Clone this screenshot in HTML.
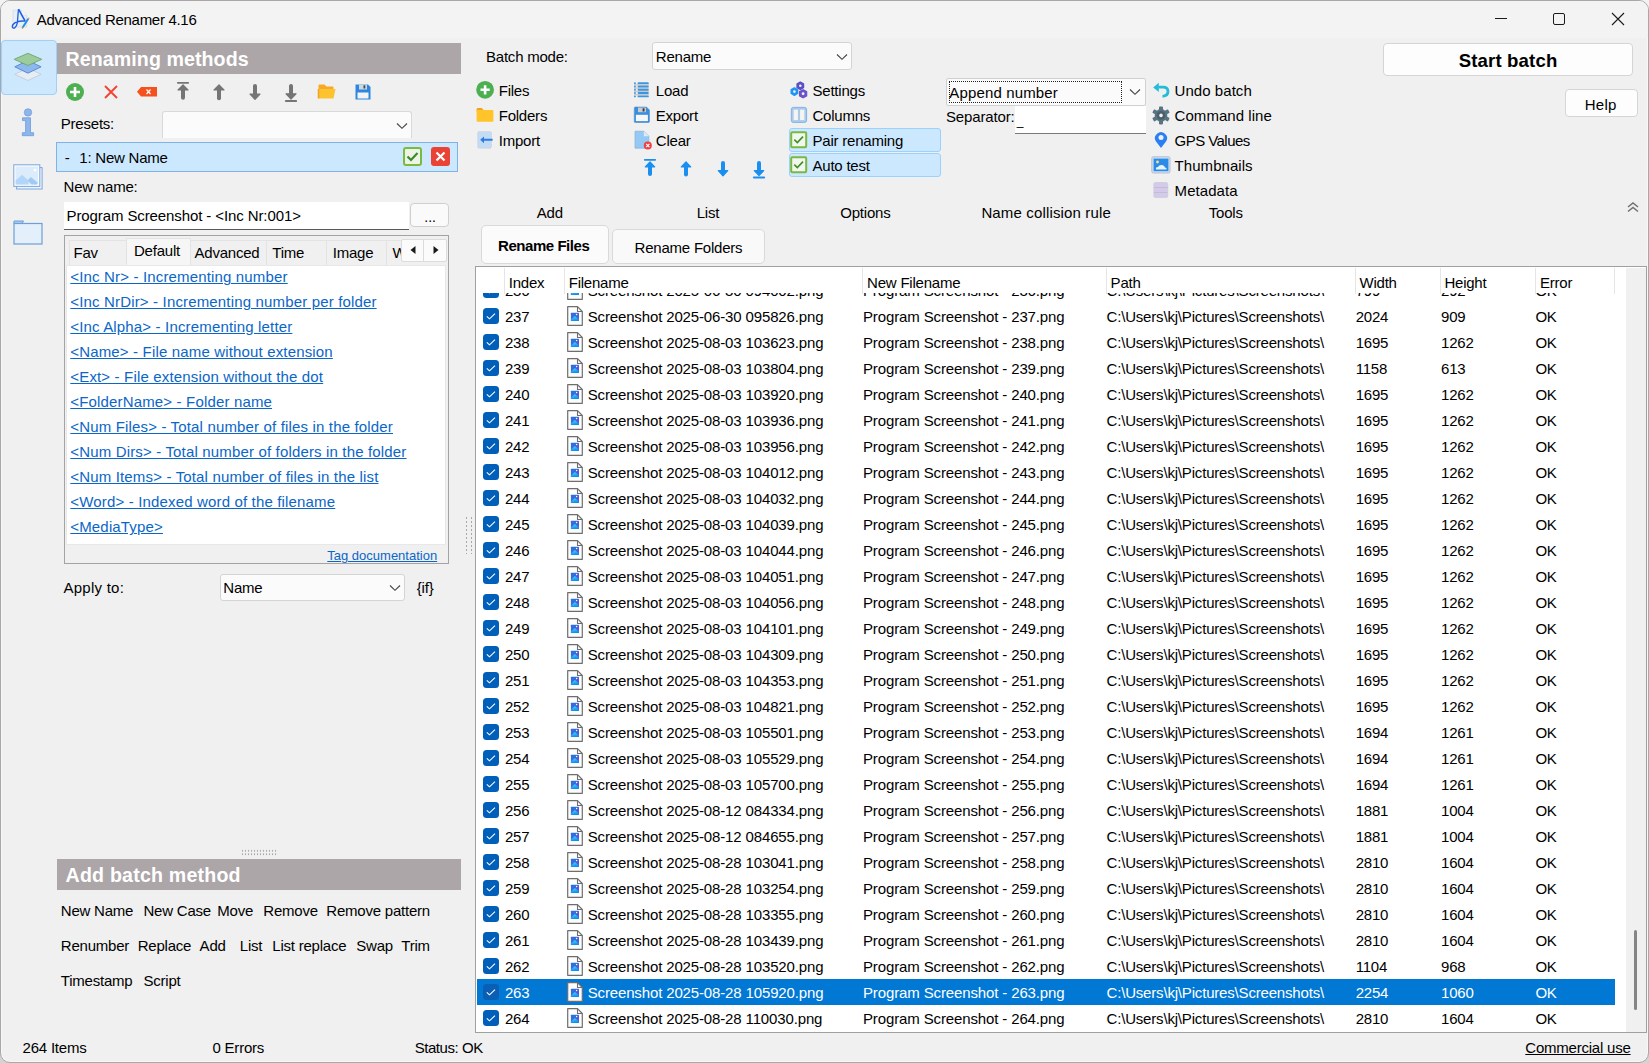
<!DOCTYPE html><html><head><meta charset="utf-8"><style>
html,body{margin:0;padding:0;width:1649px;height:1063px;overflow:hidden;background:linear-gradient(#f2f2f2 50%,#d3d3d3 50%)}
body{position:relative;font-family:"Liberation Sans",sans-serif;color:#000}
.t{position:absolute;white-space:nowrap}
.b{position:absolute;box-sizing:border-box}
a,.u{text-decoration:underline}
</style></head><body>
<svg width="0" height="0" style="position:absolute"><defs><linearGradient id="fg" x1="0" y1="0" x2="1" y2="1"><stop offset="0" stop-color="#1f78e0"/><stop offset="1" stop-color="#6a4fcf"/></linearGradient><linearGradient id="fm" x1="0" y1="0" x2="0.3" y2="1"><stop offset="0" stop-color="#48dcfb"/><stop offset="1" stop-color="#128ef0"/></linearGradient></defs></svg>
<div class="b" style="left:0px;top:0px;width:1649px;height:1063px;background:#f0f0f0;border:1px solid #a9a7a8;border-radius:10px;box-shadow:inset 0 0 0 1px #f7f7f7;"></div>
<div class="b" style="left:1px;top:1px;width:1647px;height:37px;background:#f3f3f3;border-radius:9px 9px 0 0;"></div>
<svg class="b" style="left:10px;top:7px" width="22" height="24" viewBox="0 0 22 24">
<path d="M3 3.2 H11.5 L16.6 8.2 V20 H3 Z" fill="#e6eef6" stroke="#d0d8e0" stroke-width="0.7"/>
<path d="M11.5 3.2 V8.2 H16.6" fill="#f4f8fb" stroke="#d0d8e0" stroke-width="0.5"/>
<path d="M8.5 2.2 Q7.8 9 7.6 13 Q7.3 18.5 5 20.6 Q3 22 2.3 20 Q2 17.6 5.2 15.6 Q8 14 12 14 L15.5 14.2" fill="none" stroke="#1d5fe0" stroke-width="1.3"/>
<path d="M8.5 2.2 L15 13.8" fill="none" stroke="#1d5fe0" stroke-width="1.6"/>
<path d="M12.8 20.3 L18.3 11.8" stroke="#1a8fe8" stroke-width="1.9"/>
<circle cx="18.6" cy="11.3" r="0.9" fill="#f0907e"/>
<circle cx="12.5" cy="20.8" r="0.9" fill="#c8901c"/>
</svg>
<div class="t" style="left:36.8px;top:10.1px;font-size:15px;line-height:20px;letter-spacing:-0.3px;">Advanced Renamer 4.16</div>
<div class="b" style="left:1495px;top:18px;width:12px;height:1px;background:#1a1a1a;"></div>
<div class="b" style="left:1553px;top:13px;width:12px;height:12px;border:1px solid #1a1a1a;border-radius:2px;"></div>
<svg class="b" style="left:1611px;top:12px" width="14" height="14" viewBox="0 0 14 14"><path d="M1 1 L13 13 M13 1 L1 13" stroke="#1a1a1a" stroke-width="1.1"/></svg>
<div class="b" style="left:1px;top:40px;width:56px;height:55px;background:#cde8fd;border:1px solid #9fd0f8;border-radius:4px;"></div>
<svg class="b" style="left:8px;top:45px" width="40" height="40" viewBox="0 0 40 40">
<path d="M6.8 29.3 L19.9 23 L33.1 29.3 L19.9 35.5 Z" fill="#e6edf5" stroke="#c3c6d6" stroke-width="0.8"/>
<path d="M6.8 21.8 L19.9 15.5 L33.1 21.8 L19.9 28.2 Z" fill="#8cb8ef" stroke="#4f86cf" stroke-width="0.9"/>
<path d="M6.2 14.3 L19.9 8.3 L33.8 14.3 L19.9 20.5 Z" fill="#9dcb9b" stroke="#69a86a" stroke-width="0.9"/>
</svg>
<svg class="b" style="left:18px;top:104px" width="20" height="34" viewBox="0 0 20 34">
<circle cx="10" cy="8.4" r="3.7" fill="#8db6ee" stroke="#6f9ad8" stroke-width="0.7"/>
<path d="M4.5 13.8 H12.5 V28.7 H15.6 V31.7 H4.3 V28.7 H7.6 V16.6 H4.5 Z" fill="#8db6ee" stroke="#6f9ad8" stroke-width="0.8"/>
</svg>
<svg class="b" style="left:13px;top:164px" width="30" height="26" viewBox="0 0 30 26">
<rect x="3.6" y="3.6" width="25.5" height="21.4" fill="#eef6fd" stroke="#7aa6dc" stroke-width="1"/>
<rect x="0.8" y="0.8" width="26" height="21.6" fill="#fafcff" stroke="#7aa6dc" stroke-width="1"/>
<rect x="2.6" y="2.6" width="22.4" height="18" fill="#dcecfb"/>
<path d="M2.6 20.6 V16.5 L9 10.7 L15.5 16.5 V20.6 Z" fill="#b3d6f8"/>
<path d="M14.5 16.4 L17.8 13 L25 19 L23.5 20.6 H18.5 Z" fill="#9fcaf4"/>
<rect x="20.8" y="4.8" width="2.6" height="2.6" fill="#fff"/>
</svg>
<svg class="b" style="left:13px;top:219px" width="30" height="26" viewBox="0 0 30 26">
<path d="M1 4.5 H9 L10.5 2 H1 Z" fill="#a9cdf2" stroke="#6d9fd8" stroke-width="1"/>
<rect x="1" y="4.5" width="28" height="20.5" fill="#e3f0fc" stroke="#6d9fd8" stroke-width="1.2"/>
</svg>
<div class="b" style="left:57px;top:43px;width:404px;height:31px;background:#aca6a8;"></div>
<div class="t" style="left:65.6px;top:49.3px;font-size:19.6px;line-height:20px;font-weight:700;color:#fff;letter-spacing:0.08px;">Renaming methods</div>
<svg class="b" style="left:65px;top:82px" width="20" height="20" viewBox="0 0 20 20"><circle cx="10" cy="10" r="9" fill="#4caf50"/><path d="M10 5 V15 M5 10 H15" stroke="#fff" stroke-width="2.6"/></svg>
<svg class="b" style="left:103px;top:84px" width="16" height="16" viewBox="0 0 16 16"><path d="M2 2 L14 14 M14 2 L2 14" stroke="#f44336" stroke-width="1.9"/></svg>
<svg class="b" style="left:136px;top:86px" width="22" height="12" viewBox="0 0 22 12"><path d="M5 1 H21 V10.5 H5 L1 5.75 Z" fill="#f4511e"/><path d="M10.5 3.5 L14.5 8 M14.5 3.5 L10.5 8" stroke="#fff" stroke-width="1.2"/></svg>
<svg class="b" style="left:175px;top:80px" width="16" height="23.700000000000003" viewBox="0 0 16 23.700000000000003"><line x1="8" y1="10" x2="8" y2="17.700000000000003" stroke="#757575" stroke-width="4" stroke-linecap="round"/><path d="M8 4.8 L13 10 H3 Z" fill="#757575" stroke="#757575" stroke-width="1.2" stroke-linejoin="round"/><line x1="2.8" y1="2.8" x2="13.2" y2="2.8" stroke="#757575" stroke-width="1.8" stroke-linecap="round"/></svg>
<svg class="b" style="left:211px;top:79.5px" width="16" height="24.200000000000003" viewBox="0 0 16 24.200000000000003"><line x1="8" y1="10.0" x2="8" y2="18.200000000000003" stroke="#757575" stroke-width="4" stroke-linecap="round"/><path d="M8 4.8 L13 10.0 H3 Z" fill="#757575" stroke="#757575" stroke-width="1.2" stroke-linejoin="round"/></svg>
<svg class="b" style="left:247px;top:79.9px" width="16" height="24.19999999999999" viewBox="0 0 16 24.19999999999999"><line x1="8" y1="6.0" x2="8" y2="14.199999999999989" stroke="#757575" stroke-width="4" stroke-linecap="round"/><path d="M8 19.399999999999988 L13 14.199999999999989 H3 Z" fill="#757575" stroke="#757575" stroke-width="1.2" stroke-linejoin="round"/></svg>
<svg class="b" style="left:283px;top:79.9px" width="16" height="23.799999999999997" viewBox="0 0 16 23.799999999999997"><line x1="8" y1="6.0" x2="8" y2="13.799999999999997" stroke="#757575" stroke-width="4" stroke-linecap="round"/><path d="M8 18.999999999999996 L13 13.799999999999997 H3 Z" fill="#757575" stroke="#757575" stroke-width="1.2" stroke-linejoin="round"/><line x1="2.8" y1="20.999999999999996" x2="13.2" y2="20.999999999999996" stroke="#757575" stroke-width="1.8" stroke-linecap="round"/></svg>
<svg class="b" style="left:317px;top:83px" width="20" height="17" viewBox="0 0 20 17"><path d="M1.5 2.5 Q1.5 1.5 2.5 1.5 H7.5 L9.5 3.5 H15.5 Q16.5 3.5 16.5 4.5 V6 H1.5 Z" fill="#f9a825"/><path d="M1.5 6 H18.5 L16.5 15.5 H1.5 Z" fill="#fdc32f"/><path d="M1.5 15.5 V6" stroke="#f2a21e" stroke-width="1.5"/></svg>
<svg class="b" style="left:354px;top:83px" width="18" height="18" viewBox="0 0 18 18"><path d="M1.5 1.5 H14 L16.5 4 V16.5 H1.5 Z" fill="#2f86de"/><rect x="5" y="1.5" width="8" height="5" fill="#cfd8e0"/><rect x="9.5" y="2.3" width="1.8" height="3.2" fill="#3c4a57"/><rect x="3.5" y="9.5" width="11" height="6" fill="#f2f4f6"/></svg>
<div class="t" style="left:60.8px;top:114.1px;font-size:15px;line-height:20px;letter-spacing:-0.22px;">Presets:</div>
<div class="b" style="left:162px;top:111px;width:250px;height:27px;background:#fbfbfb;border:1px solid #d9d9d9;border-bottom:none;border-radius:3px 3px 0 0;"></div>
<svg class="b" style="left:395.5px;top:121.5px" width="12" height="8" viewBox="0 0 12 8"><path d="M1 1.5 L6 6.3 L11 1.5" fill="none" stroke="#444" stroke-width="1.1"/></svg>
<div class="b" style="left:56px;top:142px;width:402px;height:30px;background:#cce8ff;border:1px solid #7eb3ea;"></div>
<div class="t" style="left:64.8px;top:148.1px;font-size:15px;line-height:20px;letter-spacing:-0.22px;">-</div>
<div class="t" style="left:79.3px;top:148.1px;font-size:15px;line-height:20px;letter-spacing:-0.22px;">1: New Name</div>
<div class="b" style="left:403px;top:147px;width:19px;height:19px;background:#edf4e6;border:2.2px solid #79bb3f;border-radius:3px;"></div>
<svg class="b" style="left:403px;top:147px" width="19" height="19" viewBox="0 0 19 19"><path d="M4.5 9.5 L8 13 L14.5 6" fill="none" stroke="#3d8a2a" stroke-width="2.2"/></svg>
<div class="b" style="left:431px;top:147px;width:19px;height:19px;background:#ea4335;border-radius:3px;"></div>
<svg class="b" style="left:431px;top:147px" width="19" height="19" viewBox="0 0 19 19"><path d="M5.5 5.5 L13.5 13.5 M13.5 5.5 L5.5 13.5" stroke="#fff" stroke-width="2.2"/></svg>
<div class="t" style="left:63.6px;top:177.2px;font-size:15px;line-height:20px;letter-spacing:-0.22px;">New name:</div>
<div class="b" style="left:64px;top:202px;width:345px;height:28px;background:#fff;border-bottom:1px solid #5a5a5a;"></div>
<div class="t" style="left:66.5px;top:206.3px;font-size:15px;line-height:20px;letter-spacing:-0.1px;">Program Screenshot - &lt;Inc Nr:001&gt;</div>
<div class="b" style="left:410px;top:203px;width:39px;height:24px;background:#fafafa;border:1px solid #d0d0d0;border-radius:4px;"></div>
<div class="t" style="left:424.3px;top:206.6px;font-size:14px;line-height:20px;letter-spacing:0px;">...</div>
<div class="b" style="left:64px;top:235px;width:385px;height:329px;border:1px solid #a3a3a3;background:#f0f0f0;"></div>
<div class="b" style="left:69px;top:240px;width:333px;height:25px;background:#f0f0f0;border-top:1px solid #e3e3e3;"></div>
<div class="b" style="left:69px;top:240px;width:1px;height:25px;background:#e3e3e3;"></div>
<div class="b" style="left:266px;top:240px;width:1px;height:25px;background:#e3e3e3;"></div>
<div class="b" style="left:326px;top:240px;width:1px;height:25px;background:#e3e3e3;"></div>
<div class="b" style="left:386px;top:240px;width:1px;height:25px;background:#e3e3e3;"></div>
<div class="b" style="left:126px;top:238px;width:65px;height:27px;background:#f6f6f6;border:1px solid #e3e3e3;border-bottom:none;"></div>
<div class="t" style="left:73.5px;top:242.9px;font-size:15px;line-height:20px;letter-spacing:-0.22px;">Fav</div>
<div class="t" style="left:134.0px;top:241.3px;font-size:15px;line-height:20px;letter-spacing:-0.22px;">Default</div>
<div class="t" style="left:194.5px;top:242.8px;font-size:15px;line-height:20px;letter-spacing:-0.22px;">Advanced</div>
<div class="t" style="left:272.3px;top:242.8px;font-size:15px;line-height:20px;letter-spacing:-0.22px;">Time</div>
<div class="t" style="left:332.7px;top:242.8px;font-size:15px;line-height:20px;letter-spacing:-0.22px;">Image</div>
<div class="b" style="left:387px;top:240px;width:15px;height:25px;overflow:hidden">
<div class="t" style="left:5.6px;top:2.8px;font-size:15px;line-height:20px;letter-spacing:-0.22px;">W</div>
</div>
<div class="b" style="left:401px;top:239px;width:46px;height:23px;background:#fbfbfb;border:1px solid #dcdcdc;border-radius:2px;"></div>
<div class="b" style="left:423px;top:240px;width:1px;height:21px;background:#dcdcdc;"></div>
<svg class="b" style="left:408px;top:244px" width="10" height="12" viewBox="0 0 10 12"><path d="M7.5 2 L2.5 6 L7.5 10 Z" fill="#1a1a1a"/></svg>
<svg class="b" style="left:431px;top:244px" width="10" height="12" viewBox="0 0 10 12"><path d="M2.5 2 L7.5 6 L2.5 10 Z" fill="#1a1a1a"/></svg>
<div class="b" style="left:66px;top:265px;width:380px;height:280px;background:#fff;border:1px solid #e8e8e8;"></div>
<div class="t" style="left:70.3px;top:267.3px;font-size:15px;line-height:20px;color:#0a66c8;letter-spacing:0.16px;text-decoration:underline;">&lt;Inc Nr&gt; - Incrementing number</div>
<div class="t" style="left:70.3px;top:292.3px;font-size:15px;line-height:20px;color:#0a66c8;letter-spacing:0.16px;text-decoration:underline;">&lt;Inc NrDir&gt; - Incrementing number per folder</div>
<div class="t" style="left:70.3px;top:317.3px;font-size:15px;line-height:20px;color:#0a66c8;letter-spacing:0.16px;text-decoration:underline;">&lt;Inc Alpha&gt; - Incrementing letter</div>
<div class="t" style="left:70.3px;top:342.3px;font-size:15px;line-height:20px;color:#0a66c8;letter-spacing:0.16px;text-decoration:underline;">&lt;Name&gt; - File name without extension</div>
<div class="t" style="left:70.3px;top:367.3px;font-size:15px;line-height:20px;color:#0a66c8;letter-spacing:0.16px;text-decoration:underline;">&lt;Ext&gt; - File extension without the dot</div>
<div class="t" style="left:70.3px;top:392.3px;font-size:15px;line-height:20px;color:#0a66c8;letter-spacing:0.16px;text-decoration:underline;">&lt;FolderName&gt; - Folder name</div>
<div class="t" style="left:70.3px;top:417.3px;font-size:15px;line-height:20px;color:#0a66c8;letter-spacing:0.16px;text-decoration:underline;">&lt;Num Files&gt; - Total number of files in the folder</div>
<div class="t" style="left:70.3px;top:442.3px;font-size:15px;line-height:20px;color:#0a66c8;letter-spacing:0.16px;text-decoration:underline;">&lt;Num Dirs&gt; - Total number of folders in the folder</div>
<div class="t" style="left:70.3px;top:467.3px;font-size:15px;line-height:20px;color:#0a66c8;letter-spacing:0.16px;text-decoration:underline;">&lt;Num Items&gt; - Total number of files in the list</div>
<div class="t" style="left:70.3px;top:492.3px;font-size:15px;line-height:20px;color:#0a66c8;letter-spacing:0.16px;text-decoration:underline;">&lt;Word&gt; - Indexed word of the filename</div>
<div class="t" style="left:70.3px;top:517.3px;font-size:15px;line-height:20px;color:#0a66c8;letter-spacing:0.16px;text-decoration:underline;">&lt;MediaType&gt;</div>
<div class="t" style="left:327.3px;top:545.6px;font-size:13px;line-height:20px;color:#0a66c8;text-decoration:underline;">Tag documentation</div>
<div class="t" style="left:63.5px;top:578.0px;font-size:15px;line-height:20px;letter-spacing:0.25px;">Apply to:</div>
<div class="b" style="left:220px;top:574px;width:185px;height:27px;background:#fbfbfb;border:1px solid #d4d4d4;border-radius:3px;"></div>
<div class="t" style="left:223.3px;top:577.8px;font-size:15px;line-height:20px;letter-spacing:-0.22px;">Name</div>
<svg class="b" style="left:389px;top:583.5px" width="12" height="8" viewBox="0 0 12 8"><path d="M1 1.5 L6 6.3 L11 1.5" fill="none" stroke="#444" stroke-width="1.1"/></svg>
<div class="t" style="left:416.8px;top:578.0px;font-size:15px;line-height:20px;letter-spacing:-0.22px;">{if}</div>
<div class="b" style="left:241px;top:849px;width:37px;height:7px;background-image:radial-gradient(circle,#a8a8a8 0.9px,transparent 1.1px);background-size:3px 3.5px;"></div>
<div class="b" style="left:57px;top:859px;width:404px;height:31px;background:#aca6a8;"></div>
<div class="t" style="left:65.6px;top:865.0px;font-size:19.6px;line-height:20px;font-weight:700;color:#fff;letter-spacing:0.2px;">Add batch method</div>
<div class="t" style="left:60.8px;top:901.3px;font-size:15px;line-height:20px;letter-spacing:-0.22px;">New Name</div>
<div class="t" style="left:143.5px;top:901.3px;font-size:15px;line-height:20px;letter-spacing:-0.22px;">New Case</div>
<div class="t" style="left:217.3px;top:901.3px;font-size:15px;line-height:20px;letter-spacing:-0.22px;">Move</div>
<div class="t" style="left:263.3px;top:901.3px;font-size:15px;line-height:20px;letter-spacing:-0.22px;">Remove</div>
<div class="t" style="left:326.3px;top:901.3px;font-size:15px;line-height:20px;letter-spacing:-0.22px;">Remove pattern</div>
<div class="t" style="left:60.8px;top:936.1px;font-size:15px;line-height:20px;letter-spacing:-0.22px;">Renumber</div>
<div class="t" style="left:137.7px;top:936.1px;font-size:15px;line-height:20px;letter-spacing:-0.22px;">Replace</div>
<div class="t" style="left:199.6px;top:936.1px;font-size:15px;line-height:20px;letter-spacing:-0.22px;">Add</div>
<div class="t" style="left:239.8px;top:936.1px;font-size:15px;line-height:20px;letter-spacing:-0.22px;">List</div>
<div class="t" style="left:272.3px;top:936.1px;font-size:15px;line-height:20px;letter-spacing:-0.22px;">List replace</div>
<div class="t" style="left:356.3px;top:936.1px;font-size:15px;line-height:20px;letter-spacing:-0.22px;">Swap</div>
<div class="t" style="left:401.3px;top:936.1px;font-size:15px;line-height:20px;letter-spacing:-0.22px;">Trim</div>
<div class="t" style="left:60.8px;top:971.0px;font-size:15px;line-height:20px;letter-spacing:-0.22px;">Timestamp</div>
<div class="t" style="left:143.5px;top:971.0px;font-size:15px;line-height:20px;letter-spacing:-0.22px;">Script</div>
<div class="b" style="left:464px;top:516px;width:9px;height:38px;background-image:radial-gradient(circle,#a8a8a8 0.9px,transparent 1.1px);background-size:5px 4px;"></div>
<div class="t" style="left:22.6px;top:1038.0px;font-size:15px;line-height:20px;letter-spacing:-0.22px;">264 Items</div>
<div class="t" style="left:212.5px;top:1038.0px;font-size:15px;line-height:20px;letter-spacing:-0.22px;">0 Errors</div>
<div class="t" style="left:414.7px;top:1038.0px;font-size:15px;line-height:20px;letter-spacing:-0.45px;">Status: OK</div>
<div class="t" style="left:1525.3px;top:1038.0px;font-size:15px;line-height:20px;letter-spacing:-0.22px;text-decoration:underline;">Commercial use</div>
<div class="t" style="left:486.0px;top:47.0px;font-size:15px;line-height:20px;letter-spacing:-0.22px;">Batch mode:</div>
<div class="b" style="left:652px;top:42px;width:200px;height:28px;background:#fbfbfb;border:1px solid #d4d4d4;border-radius:3px;"></div>
<div class="t" style="left:655.8px;top:47.1px;font-size:15px;line-height:20px;letter-spacing:-0.22px;">Rename</div>
<svg class="b" style="left:835.5px;top:52.5px" width="12" height="8" viewBox="0 0 12 8"><path d="M1 1.5 L6 6.3 L11 1.5" fill="none" stroke="#444" stroke-width="1.1"/></svg>
<svg class="b" style="left:475px;top:80px" width="20" height="20" viewBox="0 0 20 20"><circle cx="10.1" cy="9.8" r="8.9" fill="#4caf50"/><path d="M10.1 5.2 V14.4 M5.5 9.8 H14.7" stroke="#fff" stroke-width="2.6"/></svg>
<div class="t" style="left:498.7px;top:80.9px;font-size:15px;line-height:20px;letter-spacing:-0.22px;">Files</div>
<svg class="b" style="left:476px;top:107px" width="18" height="16" viewBox="0 0 18 16"><path d="M0.6 2.2 Q0.6 0.9 1.9 0.9 H5.6 L7.2 2.6 V4.5 H0.6 Z" fill="#f4a21c"/><rect x="0.6" y="3" width="16.8" height="11.8" rx="1" fill="#ffc42a"/></svg>
<div class="t" style="left:498.7px;top:105.8px;font-size:15px;line-height:20px;letter-spacing:-0.22px;">Folders</div>
<svg class="b" style="left:476px;top:131px" width="18" height="18" viewBox="0 0 18 18"><rect x="1.7" y="0.4" width="13.8" height="16.9" rx="1.6" fill="#c3dbf5" stroke="#c8c0c0" stroke-width="0.6" stroke-dasharray="1 1"/><path d="M4.2 8.8 L8 5.4 V7.8 H16.6 V9.8 H8 V12.2 Z" fill="#2a7de1"/></svg>
<div class="t" style="left:498.7px;top:130.7px;font-size:15px;line-height:20px;letter-spacing:-0.22px;">Import</div>
<svg class="b" style="left:633px;top:81px" width="18" height="18" viewBox="0 0 18 18"><rect x="1" y="3.1" width="14.8" height="1.4" fill="#c8c8c8"/><rect x="1" y="6.4" width="14.8" height="1.4" fill="#c8c8c8"/><rect x="1" y="9.7" width="14.8" height="1.4" fill="#c8c8c8"/><rect x="1" y="13.0" width="14.8" height="1.4" fill="#c8c8c8"/><rect x="1" y="1.2" width="1.9" height="1.9" rx="0.9" fill="#3d95e0"/><rect x="4.6" y="1.2" width="11.2" height="1.9" rx="0.9" fill="#3d95e0"/><rect x="1" y="4.5" width="1.9" height="1.9" rx="0.9" fill="#3d95e0"/><rect x="4.6" y="4.5" width="11.2" height="1.9" rx="0.9" fill="#3d95e0"/><rect x="1" y="7.8" width="1.9" height="1.9" rx="0.9" fill="#3d95e0"/><rect x="4.6" y="7.8" width="11.2" height="1.9" rx="0.9" fill="#3d95e0"/><rect x="1" y="11.1" width="1.9" height="1.9" rx="0.9" fill="#3d95e0"/><rect x="4.6" y="11.1" width="11.2" height="1.9" rx="0.9" fill="#3d95e0"/><rect x="1" y="14.4" width="1.9" height="1.9" rx="0.9" fill="#3d95e0"/><rect x="4.6" y="14.4" width="11.2" height="1.9" rx="0.9" fill="#3d95e0"/></svg>
<div class="t" style="left:655.8px;top:81.1px;font-size:15px;line-height:20px;letter-spacing:-0.22px;">Load</div>
<svg class="b" style="left:633px;top:106px" width="18" height="18" viewBox="0 0 18 18"><path d="M1.3 2 Q1.3 1.1 2.2 1.1 H13.5 L16.4 4 V15.6 Q16.4 16.5 15.5 16.5 H2.2 Q1.3 16.5 1.3 15.6 Z" fill="#3a8ee0" stroke="#5a8fc0" stroke-width="0.7"/><rect x="5" y="1.6" width="8" height="4.6" fill="#c8ccd2"/><rect x="9.6" y="2.3" width="1.9" height="3.2" fill="#333c44"/><rect x="2.9" y="8.8" width="12" height="6.3" fill="#f6f7f8"/></svg>
<div class="t" style="left:655.8px;top:106.0px;font-size:15px;line-height:20px;letter-spacing:-0.22px;">Export</div>
<svg class="b" style="left:633px;top:130px" width="20" height="21" viewBox="0 0 20 21"><path d="M2 1.2 H10.8 L15.8 6.2 V18.2 H2 Z" fill="#94c9f5" stroke="#8ab0d0" stroke-width="0.7"/><path d="M10.8 1.2 V6.2 H15.8 Z" fill="#d8ecfc"/><circle cx="14.8" cy="15.5" r="4" fill="#ef4040"/><path d="M13.2 13.9 L16.4 17.1 M16.4 13.9 L13.2 17.1" stroke="#fff" stroke-width="1.2"/></svg>
<div class="t" style="left:655.8px;top:130.8px;font-size:15px;line-height:20px;letter-spacing:-0.22px;">Clear</div>
<svg class="b" style="left:642px;top:157.3px" width="16" height="23.099999999999994" viewBox="0 0 16 23.099999999999994"><line x1="8" y1="9.8" x2="8" y2="17.099999999999994" stroke="#1a8ff0" stroke-width="4" stroke-linecap="round"/><path d="M8 4.8 L12.7 9.8 H3.3 Z" fill="#1a8ff0" stroke="#1a8ff0" stroke-width="1.2" stroke-linejoin="round"/><line x1="2.8" y1="2.8" x2="13.2" y2="2.8" stroke="#1a8ff0" stroke-width="1.8" stroke-linecap="round"/></svg>
<svg class="b" style="left:678px;top:156.8px" width="16" height="23.599999999999994" viewBox="0 0 16 23.599999999999994"><line x1="8" y1="10.0" x2="8" y2="17.599999999999994" stroke="#1a8ff0" stroke-width="4" stroke-linecap="round"/><path d="M8 4.8 L12.7 10.0 H3.3 Z" fill="#1a8ff0" stroke="#1a8ff0" stroke-width="1.2" stroke-linejoin="round"/></svg>
<svg class="b" style="left:715px;top:157.4px" width="16" height="23.69999999999999" viewBox="0 0 16 23.69999999999999"><line x1="8" y1="6.0" x2="8" y2="13.699999999999989" stroke="#1a8ff0" stroke-width="4" stroke-linecap="round"/><path d="M8 18.899999999999988 L12.7 13.699999999999989 H3.3 Z" fill="#1a8ff0" stroke="#1a8ff0" stroke-width="1.2" stroke-linejoin="round"/></svg>
<svg class="b" style="left:751px;top:157.4px" width="16" height="23.299999999999983" viewBox="0 0 16 23.299999999999983"><line x1="8" y1="6.0" x2="8" y2="13.699999999999983" stroke="#1a8ff0" stroke-width="4" stroke-linecap="round"/><path d="M8 18.499999999999982 L12.7 13.699999999999983 H3.3 Z" fill="#1a8ff0" stroke="#1a8ff0" stroke-width="1.2" stroke-linejoin="round"/><line x1="2.8" y1="20.499999999999982" x2="13.2" y2="20.499999999999982" stroke="#1a8ff0" stroke-width="1.8" stroke-linecap="round"/></svg>
<svg class="b" style="left:789px;top:80px" width="20" height="20" viewBox="0 0 20 20"><polygon points="11.30,9.40 8.18,7.60 8.18,4.00 11.30,2.20 14.42,4.00 14.42,7.60" fill="#5b4fc6" stroke="#5b4fc6" stroke-width="1.6" stroke-linejoin="round"/><circle cx="11.3" cy="5.8" r="1.3" fill="#f0f0f0"/><polygon points="5.40,15.20 2.28,13.40 2.28,9.80 5.40,8.00 8.52,9.80 8.52,13.40" fill="#2196f3" stroke="#2196f3" stroke-width="1.6" stroke-linejoin="round"/><circle cx="5.4" cy="11.6" r="1.3" fill="#f0f0f0"/><polygon points="14.10,17.65 10.72,15.70 10.72,11.80 14.10,9.85 17.48,11.80 17.48,15.70" fill="#6a52c9" stroke="#6a52c9" stroke-width="1.6" stroke-linejoin="round"/><circle cx="14.1" cy="13.75" r="1.4" fill="#f0f0f0"/></svg>
<div class="t" style="left:812.5px;top:81.0px;font-size:15px;line-height:20px;letter-spacing:-0.22px;">Settings</div>
<svg class="b" style="left:790px;top:106px" width="18" height="18" viewBox="0 0 18 18"><rect x="1.3" y="1.4" width="15.3" height="15" rx="2" fill="#9fd0fb" stroke="#80acd8" stroke-width="0.9"/><rect x="3.2" y="3.2" width="5" height="11.3" fill="#f4f4f4" stroke="#b0b8c8" stroke-width="0.5"/><rect x="9.8" y="3.2" width="5" height="11.3" fill="#f4f4f4" stroke="#b0b8c8" stroke-width="0.5"/></svg>
<div class="t" style="left:812.5px;top:105.8px;font-size:15px;line-height:20px;letter-spacing:-0.22px;">Columns</div>
<div class="b" style="left:789px;top:128px;width:152px;height:24px;background:#cce8ff;border:1px solid #99d1ff;border-radius:3px;"></div>
<svg class="b" style="left:790px;top:131px" width="18" height="18" viewBox="0 0 18 18"><rect x="1.2" y="1.2" width="15" height="15" rx="1" fill="#f1f7ec" stroke="#78b843" stroke-width="2"/><path d="M4.3 8.6 L7.3 11.6 L13 5.6" fill="none" stroke="#3e8e2c" stroke-width="1.6"/></svg>
<div class="t" style="left:812.5px;top:130.6px;font-size:15px;line-height:20px;letter-spacing:-0.22px;">Pair renaming</div>
<div class="b" style="left:789px;top:153px;width:152px;height:24px;background:#cce8ff;border:1px solid #99d1ff;border-radius:3px;"></div>
<svg class="b" style="left:790px;top:156px" width="18" height="18" viewBox="0 0 18 18"><rect x="1.2" y="1.2" width="15" height="15" rx="1" fill="#f1f7ec" stroke="#78b843" stroke-width="2"/><path d="M4.3 8.6 L7.3 11.6 L13 5.6" fill="none" stroke="#3e8e2c" stroke-width="1.6"/></svg>
<div class="t" style="left:812.5px;top:156.0px;font-size:15px;line-height:20px;letter-spacing:-0.22px;">Auto test</div>
<div class="b" style="left:946px;top:78px;width:200px;height:28px;background:#fbfbfb;border:1px solid #d0d0d0;border-radius:2px;"></div>
<div class="b" style="left:949px;top:81px;width:173px;height:22px;border:1px dotted #222;"></div>
<div class="t" style="left:949.3px;top:82.9px;font-size:15px;line-height:20px;letter-spacing:0.15px;">Append number</div>
<svg class="b" style="left:1129.2px;top:88px" width="12" height="8" viewBox="0 0 12 8"><path d="M1 1.5 L6 6.3 L11 1.5" fill="none" stroke="#444" stroke-width="1.1"/></svg>
<div class="t" style="left:946.0px;top:106.9px;font-size:15px;line-height:20px;letter-spacing:-0.15px;">Separator:</div>
<div class="b" style="left:1015px;top:106px;width:131px;height:28px;background:#fff;border-bottom:1px solid #7a7a7a;"></div>
<div class="t" style="left:1016.8px;top:111.3px;font-size:12px;line-height:20px;letter-spacing:0px;">_</div>
<svg class="b" style="left:1152px;top:81px" width="18" height="17" viewBox="0 0 18 17"><path d="M6.5 6.2 H11 Q16 6.2 16 10.6 Q16 15 10.5 15.3" fill="none" stroke="#22bcd8" stroke-width="2.8"/><path d="M1.2 6.4 L6.8 1.8 V11 Z" fill="#22bcd8"/></svg>
<div class="t" style="left:1174.6px;top:81.2px;font-size:15px;line-height:20px;letter-spacing:0.05px;">Undo batch</div>
<svg class="b" style="left:1151px;top:106px" width="20" height="20" viewBox="0 0 20 20"><g transform="translate(10 9.4)" fill="#587482"><rect x="-2" y="-9" width="4" height="4.5" rx="0.8" transform="rotate(0)"/><rect x="-2" y="-9" width="4" height="4.5" rx="0.8" transform="rotate(60)"/><rect x="-2" y="-9" width="4" height="4.5" rx="0.8" transform="rotate(120)"/><rect x="-2" y="-9" width="4" height="4.5" rx="0.8" transform="rotate(180)"/><rect x="-2" y="-9" width="4" height="4.5" rx="0.8" transform="rotate(240)"/><rect x="-2" y="-9" width="4" height="4.5" rx="0.8" transform="rotate(300)"/><circle r="6.3"/><circle r="4.3" fill="#4a5f6b"/><circle r="1.8" fill="#f0f0f0"/></g></svg>
<div class="t" style="left:1174.6px;top:106.3px;font-size:15px;line-height:20px;letter-spacing:0.05px;">Command line</div>
<svg class="b" style="left:1154px;top:131px" width="14" height="18" viewBox="0 0 14 18"><path d="M7 17 L2 10.5 A6 6 0 1 1 12 10.5 Z" fill="#2b7ff5"/><circle cx="7" cy="6.5" r="2.5" fill="#f0f0f0"/></svg>
<div class="t" style="left:1174.6px;top:130.7px;font-size:15px;line-height:20px;letter-spacing:-0.55px;">GPS Values</div>
<svg class="b" style="left:1151px;top:156px" width="20" height="18" viewBox="0 0 20 18"><rect x="0.8" y="0.8" width="18.2" height="16.2" rx="1.5" fill="#c9e2fb" stroke="#b4b9c0" stroke-width="0.9"/><rect x="2.6" y="2.6" width="14.8" height="12.6" fill="#2b8be6"/><circle cx="6.5" cy="6" r="1.4" fill="#f3e48a"/><path d="M5 13.4 Q4.5 11 7 11 Q8 8.6 11 9 Q13.5 9 14 11.5 Q16 11.8 15.5 13.4 Z" fill="#e8f2fb"/></svg>
<div class="t" style="left:1174.6px;top:155.5px;font-size:15px;line-height:20px;letter-spacing:0.05px;">Thumbnails</div>
<svg class="b" style="left:1152px;top:181px" width="18" height="18" viewBox="0 0 18 18"><rect x="1.8" y="1.5" width="14" height="15" rx="1.5" fill="#d5c9ec"/><g fill="#b8c0cc"><rect x="1.8" y="6" width="14" height="0.9"/><rect x="1.8" y="11" width="14" height="0.9"/></g><rect x="1.8" y="1.5" width="14" height="15" rx="1.5" fill="none" stroke="#c4cad4" stroke-width="0.6"/></svg>
<div class="t" style="left:1174.6px;top:180.5px;font-size:15px;line-height:20px;letter-spacing:0.05px;">Metadata</div>
<div class="t" style="left:536.8px;top:203.2px;font-size:15px;line-height:20px;letter-spacing:-0.22px;">Add</div>
<div class="t" style="left:696.7px;top:203.2px;font-size:15px;line-height:20px;letter-spacing:-0.22px;">List</div>
<div class="t" style="left:840.3px;top:203.2px;font-size:15px;line-height:20px;letter-spacing:-0.22px;">Options</div>
<div class="t" style="left:981.4px;top:202.8px;font-size:15px;line-height:20px;letter-spacing:0.15px;">Name collision rule</div>
<div class="t" style="left:1208.8px;top:202.8px;font-size:15px;line-height:20px;letter-spacing:-0.22px;">Tools</div>
<div class="b" style="left:1383px;top:43px;width:250px;height:33px;background:#fdfdfd;border:1px solid #d5d5d5;border-radius:4px;"></div>
<div class="t" style="left:1458.7px;top:51.2px;font-size:18.6px;line-height:20px;font-weight:700;letter-spacing:0.15px;">Start batch</div>
<div class="b" style="left:1565px;top:89px;width:73px;height:28px;background:#fdfdfd;border:1px solid #d5d5d5;border-radius:4px;"></div>
<div class="t" style="left:1584.7px;top:94.6px;font-size:15px;line-height:20px;letter-spacing:0.3px;">Help</div>
<svg class="b" style="left:1626px;top:200px" width="14" height="14" viewBox="0 0 14 14"><path d="M2 7 L7 3 L12 7 M2 11.5 L7 7.5 L12 11.5" fill="none" stroke="#707070" stroke-width="1.5"/></svg>
<div class="b" style="left:481px;top:225px;width:128px;height:39px;background:#fbfbfb;border:1px solid #d9d9d9;border-radius:5px;"></div>
<div class="t" style="left:498.0px;top:236.0px;font-size:15px;line-height:20px;font-weight:700;letter-spacing:-0.45px;">Rename Files</div>
<div class="b" style="left:612px;top:229px;width:153px;height:35px;background:#f9f9f9;border:1px solid #d9d9d9;border-radius:5px;"></div>
<div class="t" style="left:634.6px;top:237.9px;font-size:15px;line-height:20px;letter-spacing:-0.22px;">Rename Folders</div>
<div class="b" style="left:475px;top:266px;width:1172px;height:767px;background:#fff;border:1px solid #a0a0a0;"></div>
<div class="b" style="left:1626px;top:268px;width:20px;height:764px;background:#f0f0f0;"></div>
<div class="b" style="left:1634px;top:930px;width:3px;height:80px;background:#858585;border-radius:2px;"></div>
<div class="b" style="left:476px;top:293px;width:1150px;height:739px;overflow:hidden">
<div class="b" style="left:7px;top:-11px;width:16px;height:16px;background:#005fb8;border-radius:3.5px;"></div>
<svg class="b" style="left:7px;top:-11px" width="16" height="16" viewBox="0 0 16 16"><path d="M3.8 8.3 L6.5 10.8 L12 5.6" fill="none" stroke="#fff" stroke-width="1.1"/></svg>
<svg class="b" style="left:91px;top:-13px" width="16" height="20" viewBox="0 0 16 20"><path d="M0.7 0.7 H10.5 L15.3 5.5 V19.3 H0.7 Z" fill="#fdfdfd" stroke="#6e6e6e" stroke-width="1.2" stroke-linejoin="round"/><path d="M10.5 0.7 V5.5 H15.3" fill="none" stroke="#6e6e6e" stroke-width="1.1" stroke-linejoin="round"/><rect x="3.9" y="6.8" width="8.1" height="8.1" rx="0.5" fill="url(#fg)"/><path d="M3.9 13.6 L7.9 10 L12 13.4 V14.9 H3.9 Z" fill="url(#fm)"/><circle cx="9.6" cy="8.6" r="0.75" fill="#fff"/></svg>
<div class="t" style="left:28.9px;top:-11.9px;font-size:15px;line-height:20px;letter-spacing:-0.22px;">236</div>
<div class="t" style="left:111.7px;top:-11.9px;font-size:15px;line-height:20px;letter-spacing:-0.14px;">Screenshot 2025-06-30 094002.png</div>
<div class="t" style="left:387.0px;top:-11.9px;font-size:15px;line-height:20px;letter-spacing:-0.13px;">Program Screenshot - 236.png</div>
<div class="t" style="left:630.5px;top:-11.9px;font-size:15px;line-height:20px;letter-spacing:-0.18px;">C:\Users\kj\Pictures\Screenshots\</div>
<div class="t" style="left:879.7px;top:-11.9px;font-size:15px;line-height:20px;letter-spacing:-0.22px;">799</div>
<div class="t" style="left:965.1px;top:-11.9px;font-size:15px;line-height:20px;letter-spacing:-0.22px;">292</div>
<div class="t" style="left:1059.4px;top:-11.9px;font-size:15px;line-height:20px;letter-spacing:-0.22px;">OK</div>
<div class="b" style="left:7px;top:15px;width:16px;height:16px;background:#005fb8;border-radius:3.5px;"></div>
<svg class="b" style="left:7px;top:15px" width="16" height="16" viewBox="0 0 16 16"><path d="M3.8 8.3 L6.5 10.8 L12 5.6" fill="none" stroke="#fff" stroke-width="1.1"/></svg>
<svg class="b" style="left:91px;top:13px" width="16" height="20" viewBox="0 0 16 20"><path d="M0.7 0.7 H10.5 L15.3 5.5 V19.3 H0.7 Z" fill="#fdfdfd" stroke="#6e6e6e" stroke-width="1.2" stroke-linejoin="round"/><path d="M10.5 0.7 V5.5 H15.3" fill="none" stroke="#6e6e6e" stroke-width="1.1" stroke-linejoin="round"/><rect x="3.9" y="6.8" width="8.1" height="8.1" rx="0.5" fill="url(#fg)"/><path d="M3.9 13.6 L7.9 10 L12 13.4 V14.9 H3.9 Z" fill="url(#fm)"/><circle cx="9.6" cy="8.6" r="0.75" fill="#fff"/></svg>
<div class="t" style="left:28.9px;top:14.1px;font-size:15px;line-height:20px;letter-spacing:-0.22px;">237</div>
<div class="t" style="left:111.7px;top:14.1px;font-size:15px;line-height:20px;letter-spacing:-0.14px;">Screenshot 2025-06-30 095826.png</div>
<div class="t" style="left:387.0px;top:14.1px;font-size:15px;line-height:20px;letter-spacing:-0.13px;">Program Screenshot - 237.png</div>
<div class="t" style="left:630.5px;top:14.1px;font-size:15px;line-height:20px;letter-spacing:-0.18px;">C:\Users\kj\Pictures\Screenshots\</div>
<div class="t" style="left:879.7px;top:14.1px;font-size:15px;line-height:20px;letter-spacing:-0.22px;">2024</div>
<div class="t" style="left:965.1px;top:14.1px;font-size:15px;line-height:20px;letter-spacing:-0.22px;">909</div>
<div class="t" style="left:1059.4px;top:14.1px;font-size:15px;line-height:20px;letter-spacing:-0.22px;">OK</div>
<div class="b" style="left:7px;top:41px;width:16px;height:16px;background:#005fb8;border-radius:3.5px;"></div>
<svg class="b" style="left:7px;top:41px" width="16" height="16" viewBox="0 0 16 16"><path d="M3.8 8.3 L6.5 10.8 L12 5.6" fill="none" stroke="#fff" stroke-width="1.1"/></svg>
<svg class="b" style="left:91px;top:39px" width="16" height="20" viewBox="0 0 16 20"><path d="M0.7 0.7 H10.5 L15.3 5.5 V19.3 H0.7 Z" fill="#fdfdfd" stroke="#6e6e6e" stroke-width="1.2" stroke-linejoin="round"/><path d="M10.5 0.7 V5.5 H15.3" fill="none" stroke="#6e6e6e" stroke-width="1.1" stroke-linejoin="round"/><rect x="3.9" y="6.8" width="8.1" height="8.1" rx="0.5" fill="url(#fg)"/><path d="M3.9 13.6 L7.9 10 L12 13.4 V14.9 H3.9 Z" fill="url(#fm)"/><circle cx="9.6" cy="8.6" r="0.75" fill="#fff"/></svg>
<div class="t" style="left:28.9px;top:40.1px;font-size:15px;line-height:20px;letter-spacing:-0.22px;">238</div>
<div class="t" style="left:111.7px;top:40.1px;font-size:15px;line-height:20px;letter-spacing:-0.14px;">Screenshot 2025-08-03 103623.png</div>
<div class="t" style="left:387.0px;top:40.1px;font-size:15px;line-height:20px;letter-spacing:-0.13px;">Program Screenshot - 238.png</div>
<div class="t" style="left:630.5px;top:40.1px;font-size:15px;line-height:20px;letter-spacing:-0.18px;">C:\Users\kj\Pictures\Screenshots\</div>
<div class="t" style="left:879.7px;top:40.1px;font-size:15px;line-height:20px;letter-spacing:-0.22px;">1695</div>
<div class="t" style="left:965.1px;top:40.1px;font-size:15px;line-height:20px;letter-spacing:-0.22px;">1262</div>
<div class="t" style="left:1059.4px;top:40.1px;font-size:15px;line-height:20px;letter-spacing:-0.22px;">OK</div>
<div class="b" style="left:7px;top:67px;width:16px;height:16px;background:#005fb8;border-radius:3.5px;"></div>
<svg class="b" style="left:7px;top:67px" width="16" height="16" viewBox="0 0 16 16"><path d="M3.8 8.3 L6.5 10.8 L12 5.6" fill="none" stroke="#fff" stroke-width="1.1"/></svg>
<svg class="b" style="left:91px;top:65px" width="16" height="20" viewBox="0 0 16 20"><path d="M0.7 0.7 H10.5 L15.3 5.5 V19.3 H0.7 Z" fill="#fdfdfd" stroke="#6e6e6e" stroke-width="1.2" stroke-linejoin="round"/><path d="M10.5 0.7 V5.5 H15.3" fill="none" stroke="#6e6e6e" stroke-width="1.1" stroke-linejoin="round"/><rect x="3.9" y="6.8" width="8.1" height="8.1" rx="0.5" fill="url(#fg)"/><path d="M3.9 13.6 L7.9 10 L12 13.4 V14.9 H3.9 Z" fill="url(#fm)"/><circle cx="9.6" cy="8.6" r="0.75" fill="#fff"/></svg>
<div class="t" style="left:28.9px;top:66.1px;font-size:15px;line-height:20px;letter-spacing:-0.22px;">239</div>
<div class="t" style="left:111.7px;top:66.1px;font-size:15px;line-height:20px;letter-spacing:-0.14px;">Screenshot 2025-08-03 103804.png</div>
<div class="t" style="left:387.0px;top:66.1px;font-size:15px;line-height:20px;letter-spacing:-0.13px;">Program Screenshot - 239.png</div>
<div class="t" style="left:630.5px;top:66.1px;font-size:15px;line-height:20px;letter-spacing:-0.18px;">C:\Users\kj\Pictures\Screenshots\</div>
<div class="t" style="left:879.7px;top:66.1px;font-size:15px;line-height:20px;letter-spacing:-0.22px;">1158</div>
<div class="t" style="left:965.1px;top:66.1px;font-size:15px;line-height:20px;letter-spacing:-0.22px;">613</div>
<div class="t" style="left:1059.4px;top:66.1px;font-size:15px;line-height:20px;letter-spacing:-0.22px;">OK</div>
<div class="b" style="left:7px;top:93px;width:16px;height:16px;background:#005fb8;border-radius:3.5px;"></div>
<svg class="b" style="left:7px;top:93px" width="16" height="16" viewBox="0 0 16 16"><path d="M3.8 8.3 L6.5 10.8 L12 5.6" fill="none" stroke="#fff" stroke-width="1.1"/></svg>
<svg class="b" style="left:91px;top:91px" width="16" height="20" viewBox="0 0 16 20"><path d="M0.7 0.7 H10.5 L15.3 5.5 V19.3 H0.7 Z" fill="#fdfdfd" stroke="#6e6e6e" stroke-width="1.2" stroke-linejoin="round"/><path d="M10.5 0.7 V5.5 H15.3" fill="none" stroke="#6e6e6e" stroke-width="1.1" stroke-linejoin="round"/><rect x="3.9" y="6.8" width="8.1" height="8.1" rx="0.5" fill="url(#fg)"/><path d="M3.9 13.6 L7.9 10 L12 13.4 V14.9 H3.9 Z" fill="url(#fm)"/><circle cx="9.6" cy="8.6" r="0.75" fill="#fff"/></svg>
<div class="t" style="left:28.9px;top:92.1px;font-size:15px;line-height:20px;letter-spacing:-0.22px;">240</div>
<div class="t" style="left:111.7px;top:92.1px;font-size:15px;line-height:20px;letter-spacing:-0.14px;">Screenshot 2025-08-03 103920.png</div>
<div class="t" style="left:387.0px;top:92.1px;font-size:15px;line-height:20px;letter-spacing:-0.13px;">Program Screenshot - 240.png</div>
<div class="t" style="left:630.5px;top:92.1px;font-size:15px;line-height:20px;letter-spacing:-0.18px;">C:\Users\kj\Pictures\Screenshots\</div>
<div class="t" style="left:879.7px;top:92.1px;font-size:15px;line-height:20px;letter-spacing:-0.22px;">1695</div>
<div class="t" style="left:965.1px;top:92.1px;font-size:15px;line-height:20px;letter-spacing:-0.22px;">1262</div>
<div class="t" style="left:1059.4px;top:92.1px;font-size:15px;line-height:20px;letter-spacing:-0.22px;">OK</div>
<div class="b" style="left:7px;top:119px;width:16px;height:16px;background:#005fb8;border-radius:3.5px;"></div>
<svg class="b" style="left:7px;top:119px" width="16" height="16" viewBox="0 0 16 16"><path d="M3.8 8.3 L6.5 10.8 L12 5.6" fill="none" stroke="#fff" stroke-width="1.1"/></svg>
<svg class="b" style="left:91px;top:117px" width="16" height="20" viewBox="0 0 16 20"><path d="M0.7 0.7 H10.5 L15.3 5.5 V19.3 H0.7 Z" fill="#fdfdfd" stroke="#6e6e6e" stroke-width="1.2" stroke-linejoin="round"/><path d="M10.5 0.7 V5.5 H15.3" fill="none" stroke="#6e6e6e" stroke-width="1.1" stroke-linejoin="round"/><rect x="3.9" y="6.8" width="8.1" height="8.1" rx="0.5" fill="url(#fg)"/><path d="M3.9 13.6 L7.9 10 L12 13.4 V14.9 H3.9 Z" fill="url(#fm)"/><circle cx="9.6" cy="8.6" r="0.75" fill="#fff"/></svg>
<div class="t" style="left:28.9px;top:118.1px;font-size:15px;line-height:20px;letter-spacing:-0.22px;">241</div>
<div class="t" style="left:111.7px;top:118.1px;font-size:15px;line-height:20px;letter-spacing:-0.14px;">Screenshot 2025-08-03 103936.png</div>
<div class="t" style="left:387.0px;top:118.1px;font-size:15px;line-height:20px;letter-spacing:-0.13px;">Program Screenshot - 241.png</div>
<div class="t" style="left:630.5px;top:118.1px;font-size:15px;line-height:20px;letter-spacing:-0.18px;">C:\Users\kj\Pictures\Screenshots\</div>
<div class="t" style="left:879.7px;top:118.1px;font-size:15px;line-height:20px;letter-spacing:-0.22px;">1695</div>
<div class="t" style="left:965.1px;top:118.1px;font-size:15px;line-height:20px;letter-spacing:-0.22px;">1262</div>
<div class="t" style="left:1059.4px;top:118.1px;font-size:15px;line-height:20px;letter-spacing:-0.22px;">OK</div>
<div class="b" style="left:7px;top:145px;width:16px;height:16px;background:#005fb8;border-radius:3.5px;"></div>
<svg class="b" style="left:7px;top:145px" width="16" height="16" viewBox="0 0 16 16"><path d="M3.8 8.3 L6.5 10.8 L12 5.6" fill="none" stroke="#fff" stroke-width="1.1"/></svg>
<svg class="b" style="left:91px;top:143px" width="16" height="20" viewBox="0 0 16 20"><path d="M0.7 0.7 H10.5 L15.3 5.5 V19.3 H0.7 Z" fill="#fdfdfd" stroke="#6e6e6e" stroke-width="1.2" stroke-linejoin="round"/><path d="M10.5 0.7 V5.5 H15.3" fill="none" stroke="#6e6e6e" stroke-width="1.1" stroke-linejoin="round"/><rect x="3.9" y="6.8" width="8.1" height="8.1" rx="0.5" fill="url(#fg)"/><path d="M3.9 13.6 L7.9 10 L12 13.4 V14.9 H3.9 Z" fill="url(#fm)"/><circle cx="9.6" cy="8.6" r="0.75" fill="#fff"/></svg>
<div class="t" style="left:28.9px;top:144.1px;font-size:15px;line-height:20px;letter-spacing:-0.22px;">242</div>
<div class="t" style="left:111.7px;top:144.1px;font-size:15px;line-height:20px;letter-spacing:-0.14px;">Screenshot 2025-08-03 103956.png</div>
<div class="t" style="left:387.0px;top:144.1px;font-size:15px;line-height:20px;letter-spacing:-0.13px;">Program Screenshot - 242.png</div>
<div class="t" style="left:630.5px;top:144.1px;font-size:15px;line-height:20px;letter-spacing:-0.18px;">C:\Users\kj\Pictures\Screenshots\</div>
<div class="t" style="left:879.7px;top:144.1px;font-size:15px;line-height:20px;letter-spacing:-0.22px;">1695</div>
<div class="t" style="left:965.1px;top:144.1px;font-size:15px;line-height:20px;letter-spacing:-0.22px;">1262</div>
<div class="t" style="left:1059.4px;top:144.1px;font-size:15px;line-height:20px;letter-spacing:-0.22px;">OK</div>
<div class="b" style="left:7px;top:171px;width:16px;height:16px;background:#005fb8;border-radius:3.5px;"></div>
<svg class="b" style="left:7px;top:171px" width="16" height="16" viewBox="0 0 16 16"><path d="M3.8 8.3 L6.5 10.8 L12 5.6" fill="none" stroke="#fff" stroke-width="1.1"/></svg>
<svg class="b" style="left:91px;top:169px" width="16" height="20" viewBox="0 0 16 20"><path d="M0.7 0.7 H10.5 L15.3 5.5 V19.3 H0.7 Z" fill="#fdfdfd" stroke="#6e6e6e" stroke-width="1.2" stroke-linejoin="round"/><path d="M10.5 0.7 V5.5 H15.3" fill="none" stroke="#6e6e6e" stroke-width="1.1" stroke-linejoin="round"/><rect x="3.9" y="6.8" width="8.1" height="8.1" rx="0.5" fill="url(#fg)"/><path d="M3.9 13.6 L7.9 10 L12 13.4 V14.9 H3.9 Z" fill="url(#fm)"/><circle cx="9.6" cy="8.6" r="0.75" fill="#fff"/></svg>
<div class="t" style="left:28.9px;top:170.1px;font-size:15px;line-height:20px;letter-spacing:-0.22px;">243</div>
<div class="t" style="left:111.7px;top:170.1px;font-size:15px;line-height:20px;letter-spacing:-0.14px;">Screenshot 2025-08-03 104012.png</div>
<div class="t" style="left:387.0px;top:170.1px;font-size:15px;line-height:20px;letter-spacing:-0.13px;">Program Screenshot - 243.png</div>
<div class="t" style="left:630.5px;top:170.1px;font-size:15px;line-height:20px;letter-spacing:-0.18px;">C:\Users\kj\Pictures\Screenshots\</div>
<div class="t" style="left:879.7px;top:170.1px;font-size:15px;line-height:20px;letter-spacing:-0.22px;">1695</div>
<div class="t" style="left:965.1px;top:170.1px;font-size:15px;line-height:20px;letter-spacing:-0.22px;">1262</div>
<div class="t" style="left:1059.4px;top:170.1px;font-size:15px;line-height:20px;letter-spacing:-0.22px;">OK</div>
<div class="b" style="left:7px;top:197px;width:16px;height:16px;background:#005fb8;border-radius:3.5px;"></div>
<svg class="b" style="left:7px;top:197px" width="16" height="16" viewBox="0 0 16 16"><path d="M3.8 8.3 L6.5 10.8 L12 5.6" fill="none" stroke="#fff" stroke-width="1.1"/></svg>
<svg class="b" style="left:91px;top:195px" width="16" height="20" viewBox="0 0 16 20"><path d="M0.7 0.7 H10.5 L15.3 5.5 V19.3 H0.7 Z" fill="#fdfdfd" stroke="#6e6e6e" stroke-width="1.2" stroke-linejoin="round"/><path d="M10.5 0.7 V5.5 H15.3" fill="none" stroke="#6e6e6e" stroke-width="1.1" stroke-linejoin="round"/><rect x="3.9" y="6.8" width="8.1" height="8.1" rx="0.5" fill="url(#fg)"/><path d="M3.9 13.6 L7.9 10 L12 13.4 V14.9 H3.9 Z" fill="url(#fm)"/><circle cx="9.6" cy="8.6" r="0.75" fill="#fff"/></svg>
<div class="t" style="left:28.9px;top:196.1px;font-size:15px;line-height:20px;letter-spacing:-0.22px;">244</div>
<div class="t" style="left:111.7px;top:196.1px;font-size:15px;line-height:20px;letter-spacing:-0.14px;">Screenshot 2025-08-03 104032.png</div>
<div class="t" style="left:387.0px;top:196.1px;font-size:15px;line-height:20px;letter-spacing:-0.13px;">Program Screenshot - 244.png</div>
<div class="t" style="left:630.5px;top:196.1px;font-size:15px;line-height:20px;letter-spacing:-0.18px;">C:\Users\kj\Pictures\Screenshots\</div>
<div class="t" style="left:879.7px;top:196.1px;font-size:15px;line-height:20px;letter-spacing:-0.22px;">1695</div>
<div class="t" style="left:965.1px;top:196.1px;font-size:15px;line-height:20px;letter-spacing:-0.22px;">1262</div>
<div class="t" style="left:1059.4px;top:196.1px;font-size:15px;line-height:20px;letter-spacing:-0.22px;">OK</div>
<div class="b" style="left:7px;top:223px;width:16px;height:16px;background:#005fb8;border-radius:3.5px;"></div>
<svg class="b" style="left:7px;top:223px" width="16" height="16" viewBox="0 0 16 16"><path d="M3.8 8.3 L6.5 10.8 L12 5.6" fill="none" stroke="#fff" stroke-width="1.1"/></svg>
<svg class="b" style="left:91px;top:221px" width="16" height="20" viewBox="0 0 16 20"><path d="M0.7 0.7 H10.5 L15.3 5.5 V19.3 H0.7 Z" fill="#fdfdfd" stroke="#6e6e6e" stroke-width="1.2" stroke-linejoin="round"/><path d="M10.5 0.7 V5.5 H15.3" fill="none" stroke="#6e6e6e" stroke-width="1.1" stroke-linejoin="round"/><rect x="3.9" y="6.8" width="8.1" height="8.1" rx="0.5" fill="url(#fg)"/><path d="M3.9 13.6 L7.9 10 L12 13.4 V14.9 H3.9 Z" fill="url(#fm)"/><circle cx="9.6" cy="8.6" r="0.75" fill="#fff"/></svg>
<div class="t" style="left:28.9px;top:222.1px;font-size:15px;line-height:20px;letter-spacing:-0.22px;">245</div>
<div class="t" style="left:111.7px;top:222.1px;font-size:15px;line-height:20px;letter-spacing:-0.14px;">Screenshot 2025-08-03 104039.png</div>
<div class="t" style="left:387.0px;top:222.1px;font-size:15px;line-height:20px;letter-spacing:-0.13px;">Program Screenshot - 245.png</div>
<div class="t" style="left:630.5px;top:222.1px;font-size:15px;line-height:20px;letter-spacing:-0.18px;">C:\Users\kj\Pictures\Screenshots\</div>
<div class="t" style="left:879.7px;top:222.1px;font-size:15px;line-height:20px;letter-spacing:-0.22px;">1695</div>
<div class="t" style="left:965.1px;top:222.1px;font-size:15px;line-height:20px;letter-spacing:-0.22px;">1262</div>
<div class="t" style="left:1059.4px;top:222.1px;font-size:15px;line-height:20px;letter-spacing:-0.22px;">OK</div>
<div class="b" style="left:7px;top:249px;width:16px;height:16px;background:#005fb8;border-radius:3.5px;"></div>
<svg class="b" style="left:7px;top:249px" width="16" height="16" viewBox="0 0 16 16"><path d="M3.8 8.3 L6.5 10.8 L12 5.6" fill="none" stroke="#fff" stroke-width="1.1"/></svg>
<svg class="b" style="left:91px;top:247px" width="16" height="20" viewBox="0 0 16 20"><path d="M0.7 0.7 H10.5 L15.3 5.5 V19.3 H0.7 Z" fill="#fdfdfd" stroke="#6e6e6e" stroke-width="1.2" stroke-linejoin="round"/><path d="M10.5 0.7 V5.5 H15.3" fill="none" stroke="#6e6e6e" stroke-width="1.1" stroke-linejoin="round"/><rect x="3.9" y="6.8" width="8.1" height="8.1" rx="0.5" fill="url(#fg)"/><path d="M3.9 13.6 L7.9 10 L12 13.4 V14.9 H3.9 Z" fill="url(#fm)"/><circle cx="9.6" cy="8.6" r="0.75" fill="#fff"/></svg>
<div class="t" style="left:28.9px;top:248.1px;font-size:15px;line-height:20px;letter-spacing:-0.22px;">246</div>
<div class="t" style="left:111.7px;top:248.1px;font-size:15px;line-height:20px;letter-spacing:-0.14px;">Screenshot 2025-08-03 104044.png</div>
<div class="t" style="left:387.0px;top:248.1px;font-size:15px;line-height:20px;letter-spacing:-0.13px;">Program Screenshot - 246.png</div>
<div class="t" style="left:630.5px;top:248.1px;font-size:15px;line-height:20px;letter-spacing:-0.18px;">C:\Users\kj\Pictures\Screenshots\</div>
<div class="t" style="left:879.7px;top:248.1px;font-size:15px;line-height:20px;letter-spacing:-0.22px;">1695</div>
<div class="t" style="left:965.1px;top:248.1px;font-size:15px;line-height:20px;letter-spacing:-0.22px;">1262</div>
<div class="t" style="left:1059.4px;top:248.1px;font-size:15px;line-height:20px;letter-spacing:-0.22px;">OK</div>
<div class="b" style="left:7px;top:275px;width:16px;height:16px;background:#005fb8;border-radius:3.5px;"></div>
<svg class="b" style="left:7px;top:275px" width="16" height="16" viewBox="0 0 16 16"><path d="M3.8 8.3 L6.5 10.8 L12 5.6" fill="none" stroke="#fff" stroke-width="1.1"/></svg>
<svg class="b" style="left:91px;top:273px" width="16" height="20" viewBox="0 0 16 20"><path d="M0.7 0.7 H10.5 L15.3 5.5 V19.3 H0.7 Z" fill="#fdfdfd" stroke="#6e6e6e" stroke-width="1.2" stroke-linejoin="round"/><path d="M10.5 0.7 V5.5 H15.3" fill="none" stroke="#6e6e6e" stroke-width="1.1" stroke-linejoin="round"/><rect x="3.9" y="6.8" width="8.1" height="8.1" rx="0.5" fill="url(#fg)"/><path d="M3.9 13.6 L7.9 10 L12 13.4 V14.9 H3.9 Z" fill="url(#fm)"/><circle cx="9.6" cy="8.6" r="0.75" fill="#fff"/></svg>
<div class="t" style="left:28.9px;top:274.1px;font-size:15px;line-height:20px;letter-spacing:-0.22px;">247</div>
<div class="t" style="left:111.7px;top:274.1px;font-size:15px;line-height:20px;letter-spacing:-0.14px;">Screenshot 2025-08-03 104051.png</div>
<div class="t" style="left:387.0px;top:274.1px;font-size:15px;line-height:20px;letter-spacing:-0.13px;">Program Screenshot - 247.png</div>
<div class="t" style="left:630.5px;top:274.1px;font-size:15px;line-height:20px;letter-spacing:-0.18px;">C:\Users\kj\Pictures\Screenshots\</div>
<div class="t" style="left:879.7px;top:274.1px;font-size:15px;line-height:20px;letter-spacing:-0.22px;">1695</div>
<div class="t" style="left:965.1px;top:274.1px;font-size:15px;line-height:20px;letter-spacing:-0.22px;">1262</div>
<div class="t" style="left:1059.4px;top:274.1px;font-size:15px;line-height:20px;letter-spacing:-0.22px;">OK</div>
<div class="b" style="left:7px;top:301px;width:16px;height:16px;background:#005fb8;border-radius:3.5px;"></div>
<svg class="b" style="left:7px;top:301px" width="16" height="16" viewBox="0 0 16 16"><path d="M3.8 8.3 L6.5 10.8 L12 5.6" fill="none" stroke="#fff" stroke-width="1.1"/></svg>
<svg class="b" style="left:91px;top:299px" width="16" height="20" viewBox="0 0 16 20"><path d="M0.7 0.7 H10.5 L15.3 5.5 V19.3 H0.7 Z" fill="#fdfdfd" stroke="#6e6e6e" stroke-width="1.2" stroke-linejoin="round"/><path d="M10.5 0.7 V5.5 H15.3" fill="none" stroke="#6e6e6e" stroke-width="1.1" stroke-linejoin="round"/><rect x="3.9" y="6.8" width="8.1" height="8.1" rx="0.5" fill="url(#fg)"/><path d="M3.9 13.6 L7.9 10 L12 13.4 V14.9 H3.9 Z" fill="url(#fm)"/><circle cx="9.6" cy="8.6" r="0.75" fill="#fff"/></svg>
<div class="t" style="left:28.9px;top:300.1px;font-size:15px;line-height:20px;letter-spacing:-0.22px;">248</div>
<div class="t" style="left:111.7px;top:300.1px;font-size:15px;line-height:20px;letter-spacing:-0.14px;">Screenshot 2025-08-03 104056.png</div>
<div class="t" style="left:387.0px;top:300.1px;font-size:15px;line-height:20px;letter-spacing:-0.13px;">Program Screenshot - 248.png</div>
<div class="t" style="left:630.5px;top:300.1px;font-size:15px;line-height:20px;letter-spacing:-0.18px;">C:\Users\kj\Pictures\Screenshots\</div>
<div class="t" style="left:879.7px;top:300.1px;font-size:15px;line-height:20px;letter-spacing:-0.22px;">1695</div>
<div class="t" style="left:965.1px;top:300.1px;font-size:15px;line-height:20px;letter-spacing:-0.22px;">1262</div>
<div class="t" style="left:1059.4px;top:300.1px;font-size:15px;line-height:20px;letter-spacing:-0.22px;">OK</div>
<div class="b" style="left:7px;top:327px;width:16px;height:16px;background:#005fb8;border-radius:3.5px;"></div>
<svg class="b" style="left:7px;top:327px" width="16" height="16" viewBox="0 0 16 16"><path d="M3.8 8.3 L6.5 10.8 L12 5.6" fill="none" stroke="#fff" stroke-width="1.1"/></svg>
<svg class="b" style="left:91px;top:325px" width="16" height="20" viewBox="0 0 16 20"><path d="M0.7 0.7 H10.5 L15.3 5.5 V19.3 H0.7 Z" fill="#fdfdfd" stroke="#6e6e6e" stroke-width="1.2" stroke-linejoin="round"/><path d="M10.5 0.7 V5.5 H15.3" fill="none" stroke="#6e6e6e" stroke-width="1.1" stroke-linejoin="round"/><rect x="3.9" y="6.8" width="8.1" height="8.1" rx="0.5" fill="url(#fg)"/><path d="M3.9 13.6 L7.9 10 L12 13.4 V14.9 H3.9 Z" fill="url(#fm)"/><circle cx="9.6" cy="8.6" r="0.75" fill="#fff"/></svg>
<div class="t" style="left:28.9px;top:326.1px;font-size:15px;line-height:20px;letter-spacing:-0.22px;">249</div>
<div class="t" style="left:111.7px;top:326.1px;font-size:15px;line-height:20px;letter-spacing:-0.14px;">Screenshot 2025-08-03 104101.png</div>
<div class="t" style="left:387.0px;top:326.1px;font-size:15px;line-height:20px;letter-spacing:-0.13px;">Program Screenshot - 249.png</div>
<div class="t" style="left:630.5px;top:326.1px;font-size:15px;line-height:20px;letter-spacing:-0.18px;">C:\Users\kj\Pictures\Screenshots\</div>
<div class="t" style="left:879.7px;top:326.1px;font-size:15px;line-height:20px;letter-spacing:-0.22px;">1695</div>
<div class="t" style="left:965.1px;top:326.1px;font-size:15px;line-height:20px;letter-spacing:-0.22px;">1262</div>
<div class="t" style="left:1059.4px;top:326.1px;font-size:15px;line-height:20px;letter-spacing:-0.22px;">OK</div>
<div class="b" style="left:7px;top:353px;width:16px;height:16px;background:#005fb8;border-radius:3.5px;"></div>
<svg class="b" style="left:7px;top:353px" width="16" height="16" viewBox="0 0 16 16"><path d="M3.8 8.3 L6.5 10.8 L12 5.6" fill="none" stroke="#fff" stroke-width="1.1"/></svg>
<svg class="b" style="left:91px;top:351px" width="16" height="20" viewBox="0 0 16 20"><path d="M0.7 0.7 H10.5 L15.3 5.5 V19.3 H0.7 Z" fill="#fdfdfd" stroke="#6e6e6e" stroke-width="1.2" stroke-linejoin="round"/><path d="M10.5 0.7 V5.5 H15.3" fill="none" stroke="#6e6e6e" stroke-width="1.1" stroke-linejoin="round"/><rect x="3.9" y="6.8" width="8.1" height="8.1" rx="0.5" fill="url(#fg)"/><path d="M3.9 13.6 L7.9 10 L12 13.4 V14.9 H3.9 Z" fill="url(#fm)"/><circle cx="9.6" cy="8.6" r="0.75" fill="#fff"/></svg>
<div class="t" style="left:28.9px;top:352.1px;font-size:15px;line-height:20px;letter-spacing:-0.22px;">250</div>
<div class="t" style="left:111.7px;top:352.1px;font-size:15px;line-height:20px;letter-spacing:-0.14px;">Screenshot 2025-08-03 104309.png</div>
<div class="t" style="left:387.0px;top:352.1px;font-size:15px;line-height:20px;letter-spacing:-0.13px;">Program Screenshot - 250.png</div>
<div class="t" style="left:630.5px;top:352.1px;font-size:15px;line-height:20px;letter-spacing:-0.18px;">C:\Users\kj\Pictures\Screenshots\</div>
<div class="t" style="left:879.7px;top:352.1px;font-size:15px;line-height:20px;letter-spacing:-0.22px;">1695</div>
<div class="t" style="left:965.1px;top:352.1px;font-size:15px;line-height:20px;letter-spacing:-0.22px;">1262</div>
<div class="t" style="left:1059.4px;top:352.1px;font-size:15px;line-height:20px;letter-spacing:-0.22px;">OK</div>
<div class="b" style="left:7px;top:379px;width:16px;height:16px;background:#005fb8;border-radius:3.5px;"></div>
<svg class="b" style="left:7px;top:379px" width="16" height="16" viewBox="0 0 16 16"><path d="M3.8 8.3 L6.5 10.8 L12 5.6" fill="none" stroke="#fff" stroke-width="1.1"/></svg>
<svg class="b" style="left:91px;top:377px" width="16" height="20" viewBox="0 0 16 20"><path d="M0.7 0.7 H10.5 L15.3 5.5 V19.3 H0.7 Z" fill="#fdfdfd" stroke="#6e6e6e" stroke-width="1.2" stroke-linejoin="round"/><path d="M10.5 0.7 V5.5 H15.3" fill="none" stroke="#6e6e6e" stroke-width="1.1" stroke-linejoin="round"/><rect x="3.9" y="6.8" width="8.1" height="8.1" rx="0.5" fill="url(#fg)"/><path d="M3.9 13.6 L7.9 10 L12 13.4 V14.9 H3.9 Z" fill="url(#fm)"/><circle cx="9.6" cy="8.6" r="0.75" fill="#fff"/></svg>
<div class="t" style="left:28.9px;top:378.1px;font-size:15px;line-height:20px;letter-spacing:-0.22px;">251</div>
<div class="t" style="left:111.7px;top:378.1px;font-size:15px;line-height:20px;letter-spacing:-0.14px;">Screenshot 2025-08-03 104353.png</div>
<div class="t" style="left:387.0px;top:378.1px;font-size:15px;line-height:20px;letter-spacing:-0.13px;">Program Screenshot - 251.png</div>
<div class="t" style="left:630.5px;top:378.1px;font-size:15px;line-height:20px;letter-spacing:-0.18px;">C:\Users\kj\Pictures\Screenshots\</div>
<div class="t" style="left:879.7px;top:378.1px;font-size:15px;line-height:20px;letter-spacing:-0.22px;">1695</div>
<div class="t" style="left:965.1px;top:378.1px;font-size:15px;line-height:20px;letter-spacing:-0.22px;">1262</div>
<div class="t" style="left:1059.4px;top:378.1px;font-size:15px;line-height:20px;letter-spacing:-0.22px;">OK</div>
<div class="b" style="left:7px;top:405px;width:16px;height:16px;background:#005fb8;border-radius:3.5px;"></div>
<svg class="b" style="left:7px;top:405px" width="16" height="16" viewBox="0 0 16 16"><path d="M3.8 8.3 L6.5 10.8 L12 5.6" fill="none" stroke="#fff" stroke-width="1.1"/></svg>
<svg class="b" style="left:91px;top:403px" width="16" height="20" viewBox="0 0 16 20"><path d="M0.7 0.7 H10.5 L15.3 5.5 V19.3 H0.7 Z" fill="#fdfdfd" stroke="#6e6e6e" stroke-width="1.2" stroke-linejoin="round"/><path d="M10.5 0.7 V5.5 H15.3" fill="none" stroke="#6e6e6e" stroke-width="1.1" stroke-linejoin="round"/><rect x="3.9" y="6.8" width="8.1" height="8.1" rx="0.5" fill="url(#fg)"/><path d="M3.9 13.6 L7.9 10 L12 13.4 V14.9 H3.9 Z" fill="url(#fm)"/><circle cx="9.6" cy="8.6" r="0.75" fill="#fff"/></svg>
<div class="t" style="left:28.9px;top:404.1px;font-size:15px;line-height:20px;letter-spacing:-0.22px;">252</div>
<div class="t" style="left:111.7px;top:404.1px;font-size:15px;line-height:20px;letter-spacing:-0.14px;">Screenshot 2025-08-03 104821.png</div>
<div class="t" style="left:387.0px;top:404.1px;font-size:15px;line-height:20px;letter-spacing:-0.13px;">Program Screenshot - 252.png</div>
<div class="t" style="left:630.5px;top:404.1px;font-size:15px;line-height:20px;letter-spacing:-0.18px;">C:\Users\kj\Pictures\Screenshots\</div>
<div class="t" style="left:879.7px;top:404.1px;font-size:15px;line-height:20px;letter-spacing:-0.22px;">1695</div>
<div class="t" style="left:965.1px;top:404.1px;font-size:15px;line-height:20px;letter-spacing:-0.22px;">1262</div>
<div class="t" style="left:1059.4px;top:404.1px;font-size:15px;line-height:20px;letter-spacing:-0.22px;">OK</div>
<div class="b" style="left:7px;top:431px;width:16px;height:16px;background:#005fb8;border-radius:3.5px;"></div>
<svg class="b" style="left:7px;top:431px" width="16" height="16" viewBox="0 0 16 16"><path d="M3.8 8.3 L6.5 10.8 L12 5.6" fill="none" stroke="#fff" stroke-width="1.1"/></svg>
<svg class="b" style="left:91px;top:429px" width="16" height="20" viewBox="0 0 16 20"><path d="M0.7 0.7 H10.5 L15.3 5.5 V19.3 H0.7 Z" fill="#fdfdfd" stroke="#6e6e6e" stroke-width="1.2" stroke-linejoin="round"/><path d="M10.5 0.7 V5.5 H15.3" fill="none" stroke="#6e6e6e" stroke-width="1.1" stroke-linejoin="round"/><rect x="3.9" y="6.8" width="8.1" height="8.1" rx="0.5" fill="url(#fg)"/><path d="M3.9 13.6 L7.9 10 L12 13.4 V14.9 H3.9 Z" fill="url(#fm)"/><circle cx="9.6" cy="8.6" r="0.75" fill="#fff"/></svg>
<div class="t" style="left:28.9px;top:430.1px;font-size:15px;line-height:20px;letter-spacing:-0.22px;">253</div>
<div class="t" style="left:111.7px;top:430.1px;font-size:15px;line-height:20px;letter-spacing:-0.14px;">Screenshot 2025-08-03 105501.png</div>
<div class="t" style="left:387.0px;top:430.1px;font-size:15px;line-height:20px;letter-spacing:-0.13px;">Program Screenshot - 253.png</div>
<div class="t" style="left:630.5px;top:430.1px;font-size:15px;line-height:20px;letter-spacing:-0.18px;">C:\Users\kj\Pictures\Screenshots\</div>
<div class="t" style="left:879.7px;top:430.1px;font-size:15px;line-height:20px;letter-spacing:-0.22px;">1694</div>
<div class="t" style="left:965.1px;top:430.1px;font-size:15px;line-height:20px;letter-spacing:-0.22px;">1261</div>
<div class="t" style="left:1059.4px;top:430.1px;font-size:15px;line-height:20px;letter-spacing:-0.22px;">OK</div>
<div class="b" style="left:7px;top:457px;width:16px;height:16px;background:#005fb8;border-radius:3.5px;"></div>
<svg class="b" style="left:7px;top:457px" width="16" height="16" viewBox="0 0 16 16"><path d="M3.8 8.3 L6.5 10.8 L12 5.6" fill="none" stroke="#fff" stroke-width="1.1"/></svg>
<svg class="b" style="left:91px;top:455px" width="16" height="20" viewBox="0 0 16 20"><path d="M0.7 0.7 H10.5 L15.3 5.5 V19.3 H0.7 Z" fill="#fdfdfd" stroke="#6e6e6e" stroke-width="1.2" stroke-linejoin="round"/><path d="M10.5 0.7 V5.5 H15.3" fill="none" stroke="#6e6e6e" stroke-width="1.1" stroke-linejoin="round"/><rect x="3.9" y="6.8" width="8.1" height="8.1" rx="0.5" fill="url(#fg)"/><path d="M3.9 13.6 L7.9 10 L12 13.4 V14.9 H3.9 Z" fill="url(#fm)"/><circle cx="9.6" cy="8.6" r="0.75" fill="#fff"/></svg>
<div class="t" style="left:28.9px;top:456.1px;font-size:15px;line-height:20px;letter-spacing:-0.22px;">254</div>
<div class="t" style="left:111.7px;top:456.1px;font-size:15px;line-height:20px;letter-spacing:-0.14px;">Screenshot 2025-08-03 105529.png</div>
<div class="t" style="left:387.0px;top:456.1px;font-size:15px;line-height:20px;letter-spacing:-0.13px;">Program Screenshot - 254.png</div>
<div class="t" style="left:630.5px;top:456.1px;font-size:15px;line-height:20px;letter-spacing:-0.18px;">C:\Users\kj\Pictures\Screenshots\</div>
<div class="t" style="left:879.7px;top:456.1px;font-size:15px;line-height:20px;letter-spacing:-0.22px;">1694</div>
<div class="t" style="left:965.1px;top:456.1px;font-size:15px;line-height:20px;letter-spacing:-0.22px;">1261</div>
<div class="t" style="left:1059.4px;top:456.1px;font-size:15px;line-height:20px;letter-spacing:-0.22px;">OK</div>
<div class="b" style="left:7px;top:483px;width:16px;height:16px;background:#005fb8;border-radius:3.5px;"></div>
<svg class="b" style="left:7px;top:483px" width="16" height="16" viewBox="0 0 16 16"><path d="M3.8 8.3 L6.5 10.8 L12 5.6" fill="none" stroke="#fff" stroke-width="1.1"/></svg>
<svg class="b" style="left:91px;top:481px" width="16" height="20" viewBox="0 0 16 20"><path d="M0.7 0.7 H10.5 L15.3 5.5 V19.3 H0.7 Z" fill="#fdfdfd" stroke="#6e6e6e" stroke-width="1.2" stroke-linejoin="round"/><path d="M10.5 0.7 V5.5 H15.3" fill="none" stroke="#6e6e6e" stroke-width="1.1" stroke-linejoin="round"/><rect x="3.9" y="6.8" width="8.1" height="8.1" rx="0.5" fill="url(#fg)"/><path d="M3.9 13.6 L7.9 10 L12 13.4 V14.9 H3.9 Z" fill="url(#fm)"/><circle cx="9.6" cy="8.6" r="0.75" fill="#fff"/></svg>
<div class="t" style="left:28.9px;top:482.1px;font-size:15px;line-height:20px;letter-spacing:-0.22px;">255</div>
<div class="t" style="left:111.7px;top:482.1px;font-size:15px;line-height:20px;letter-spacing:-0.14px;">Screenshot 2025-08-03 105700.png</div>
<div class="t" style="left:387.0px;top:482.1px;font-size:15px;line-height:20px;letter-spacing:-0.13px;">Program Screenshot - 255.png</div>
<div class="t" style="left:630.5px;top:482.1px;font-size:15px;line-height:20px;letter-spacing:-0.18px;">C:\Users\kj\Pictures\Screenshots\</div>
<div class="t" style="left:879.7px;top:482.1px;font-size:15px;line-height:20px;letter-spacing:-0.22px;">1694</div>
<div class="t" style="left:965.1px;top:482.1px;font-size:15px;line-height:20px;letter-spacing:-0.22px;">1261</div>
<div class="t" style="left:1059.4px;top:482.1px;font-size:15px;line-height:20px;letter-spacing:-0.22px;">OK</div>
<div class="b" style="left:7px;top:509px;width:16px;height:16px;background:#005fb8;border-radius:3.5px;"></div>
<svg class="b" style="left:7px;top:509px" width="16" height="16" viewBox="0 0 16 16"><path d="M3.8 8.3 L6.5 10.8 L12 5.6" fill="none" stroke="#fff" stroke-width="1.1"/></svg>
<svg class="b" style="left:91px;top:507px" width="16" height="20" viewBox="0 0 16 20"><path d="M0.7 0.7 H10.5 L15.3 5.5 V19.3 H0.7 Z" fill="#fdfdfd" stroke="#6e6e6e" stroke-width="1.2" stroke-linejoin="round"/><path d="M10.5 0.7 V5.5 H15.3" fill="none" stroke="#6e6e6e" stroke-width="1.1" stroke-linejoin="round"/><rect x="3.9" y="6.8" width="8.1" height="8.1" rx="0.5" fill="url(#fg)"/><path d="M3.9 13.6 L7.9 10 L12 13.4 V14.9 H3.9 Z" fill="url(#fm)"/><circle cx="9.6" cy="8.6" r="0.75" fill="#fff"/></svg>
<div class="t" style="left:28.9px;top:508.1px;font-size:15px;line-height:20px;letter-spacing:-0.22px;">256</div>
<div class="t" style="left:111.7px;top:508.1px;font-size:15px;line-height:20px;letter-spacing:-0.14px;">Screenshot 2025-08-12 084334.png</div>
<div class="t" style="left:387.0px;top:508.1px;font-size:15px;line-height:20px;letter-spacing:-0.13px;">Program Screenshot - 256.png</div>
<div class="t" style="left:630.5px;top:508.1px;font-size:15px;line-height:20px;letter-spacing:-0.18px;">C:\Users\kj\Pictures\Screenshots\</div>
<div class="t" style="left:879.7px;top:508.1px;font-size:15px;line-height:20px;letter-spacing:-0.22px;">1881</div>
<div class="t" style="left:965.1px;top:508.1px;font-size:15px;line-height:20px;letter-spacing:-0.22px;">1004</div>
<div class="t" style="left:1059.4px;top:508.1px;font-size:15px;line-height:20px;letter-spacing:-0.22px;">OK</div>
<div class="b" style="left:7px;top:535px;width:16px;height:16px;background:#005fb8;border-radius:3.5px;"></div>
<svg class="b" style="left:7px;top:535px" width="16" height="16" viewBox="0 0 16 16"><path d="M3.8 8.3 L6.5 10.8 L12 5.6" fill="none" stroke="#fff" stroke-width="1.1"/></svg>
<svg class="b" style="left:91px;top:533px" width="16" height="20" viewBox="0 0 16 20"><path d="M0.7 0.7 H10.5 L15.3 5.5 V19.3 H0.7 Z" fill="#fdfdfd" stroke="#6e6e6e" stroke-width="1.2" stroke-linejoin="round"/><path d="M10.5 0.7 V5.5 H15.3" fill="none" stroke="#6e6e6e" stroke-width="1.1" stroke-linejoin="round"/><rect x="3.9" y="6.8" width="8.1" height="8.1" rx="0.5" fill="url(#fg)"/><path d="M3.9 13.6 L7.9 10 L12 13.4 V14.9 H3.9 Z" fill="url(#fm)"/><circle cx="9.6" cy="8.6" r="0.75" fill="#fff"/></svg>
<div class="t" style="left:28.9px;top:534.1px;font-size:15px;line-height:20px;letter-spacing:-0.22px;">257</div>
<div class="t" style="left:111.7px;top:534.1px;font-size:15px;line-height:20px;letter-spacing:-0.14px;">Screenshot 2025-08-12 084655.png</div>
<div class="t" style="left:387.0px;top:534.1px;font-size:15px;line-height:20px;letter-spacing:-0.13px;">Program Screenshot - 257.png</div>
<div class="t" style="left:630.5px;top:534.1px;font-size:15px;line-height:20px;letter-spacing:-0.18px;">C:\Users\kj\Pictures\Screenshots\</div>
<div class="t" style="left:879.7px;top:534.1px;font-size:15px;line-height:20px;letter-spacing:-0.22px;">1881</div>
<div class="t" style="left:965.1px;top:534.1px;font-size:15px;line-height:20px;letter-spacing:-0.22px;">1004</div>
<div class="t" style="left:1059.4px;top:534.1px;font-size:15px;line-height:20px;letter-spacing:-0.22px;">OK</div>
<div class="b" style="left:7px;top:561px;width:16px;height:16px;background:#005fb8;border-radius:3.5px;"></div>
<svg class="b" style="left:7px;top:561px" width="16" height="16" viewBox="0 0 16 16"><path d="M3.8 8.3 L6.5 10.8 L12 5.6" fill="none" stroke="#fff" stroke-width="1.1"/></svg>
<svg class="b" style="left:91px;top:559px" width="16" height="20" viewBox="0 0 16 20"><path d="M0.7 0.7 H10.5 L15.3 5.5 V19.3 H0.7 Z" fill="#fdfdfd" stroke="#6e6e6e" stroke-width="1.2" stroke-linejoin="round"/><path d="M10.5 0.7 V5.5 H15.3" fill="none" stroke="#6e6e6e" stroke-width="1.1" stroke-linejoin="round"/><rect x="3.9" y="6.8" width="8.1" height="8.1" rx="0.5" fill="url(#fg)"/><path d="M3.9 13.6 L7.9 10 L12 13.4 V14.9 H3.9 Z" fill="url(#fm)"/><circle cx="9.6" cy="8.6" r="0.75" fill="#fff"/></svg>
<div class="t" style="left:28.9px;top:560.1px;font-size:15px;line-height:20px;letter-spacing:-0.22px;">258</div>
<div class="t" style="left:111.7px;top:560.1px;font-size:15px;line-height:20px;letter-spacing:-0.14px;">Screenshot 2025-08-28 103041.png</div>
<div class="t" style="left:387.0px;top:560.1px;font-size:15px;line-height:20px;letter-spacing:-0.13px;">Program Screenshot - 258.png</div>
<div class="t" style="left:630.5px;top:560.1px;font-size:15px;line-height:20px;letter-spacing:-0.18px;">C:\Users\kj\Pictures\Screenshots\</div>
<div class="t" style="left:879.7px;top:560.1px;font-size:15px;line-height:20px;letter-spacing:-0.22px;">2810</div>
<div class="t" style="left:965.1px;top:560.1px;font-size:15px;line-height:20px;letter-spacing:-0.22px;">1604</div>
<div class="t" style="left:1059.4px;top:560.1px;font-size:15px;line-height:20px;letter-spacing:-0.22px;">OK</div>
<div class="b" style="left:7px;top:587px;width:16px;height:16px;background:#005fb8;border-radius:3.5px;"></div>
<svg class="b" style="left:7px;top:587px" width="16" height="16" viewBox="0 0 16 16"><path d="M3.8 8.3 L6.5 10.8 L12 5.6" fill="none" stroke="#fff" stroke-width="1.1"/></svg>
<svg class="b" style="left:91px;top:585px" width="16" height="20" viewBox="0 0 16 20"><path d="M0.7 0.7 H10.5 L15.3 5.5 V19.3 H0.7 Z" fill="#fdfdfd" stroke="#6e6e6e" stroke-width="1.2" stroke-linejoin="round"/><path d="M10.5 0.7 V5.5 H15.3" fill="none" stroke="#6e6e6e" stroke-width="1.1" stroke-linejoin="round"/><rect x="3.9" y="6.8" width="8.1" height="8.1" rx="0.5" fill="url(#fg)"/><path d="M3.9 13.6 L7.9 10 L12 13.4 V14.9 H3.9 Z" fill="url(#fm)"/><circle cx="9.6" cy="8.6" r="0.75" fill="#fff"/></svg>
<div class="t" style="left:28.9px;top:586.1px;font-size:15px;line-height:20px;letter-spacing:-0.22px;">259</div>
<div class="t" style="left:111.7px;top:586.1px;font-size:15px;line-height:20px;letter-spacing:-0.14px;">Screenshot 2025-08-28 103254.png</div>
<div class="t" style="left:387.0px;top:586.1px;font-size:15px;line-height:20px;letter-spacing:-0.13px;">Program Screenshot - 259.png</div>
<div class="t" style="left:630.5px;top:586.1px;font-size:15px;line-height:20px;letter-spacing:-0.18px;">C:\Users\kj\Pictures\Screenshots\</div>
<div class="t" style="left:879.7px;top:586.1px;font-size:15px;line-height:20px;letter-spacing:-0.22px;">2810</div>
<div class="t" style="left:965.1px;top:586.1px;font-size:15px;line-height:20px;letter-spacing:-0.22px;">1604</div>
<div class="t" style="left:1059.4px;top:586.1px;font-size:15px;line-height:20px;letter-spacing:-0.22px;">OK</div>
<div class="b" style="left:7px;top:613px;width:16px;height:16px;background:#005fb8;border-radius:3.5px;"></div>
<svg class="b" style="left:7px;top:613px" width="16" height="16" viewBox="0 0 16 16"><path d="M3.8 8.3 L6.5 10.8 L12 5.6" fill="none" stroke="#fff" stroke-width="1.1"/></svg>
<svg class="b" style="left:91px;top:611px" width="16" height="20" viewBox="0 0 16 20"><path d="M0.7 0.7 H10.5 L15.3 5.5 V19.3 H0.7 Z" fill="#fdfdfd" stroke="#6e6e6e" stroke-width="1.2" stroke-linejoin="round"/><path d="M10.5 0.7 V5.5 H15.3" fill="none" stroke="#6e6e6e" stroke-width="1.1" stroke-linejoin="round"/><rect x="3.9" y="6.8" width="8.1" height="8.1" rx="0.5" fill="url(#fg)"/><path d="M3.9 13.6 L7.9 10 L12 13.4 V14.9 H3.9 Z" fill="url(#fm)"/><circle cx="9.6" cy="8.6" r="0.75" fill="#fff"/></svg>
<div class="t" style="left:28.9px;top:612.1px;font-size:15px;line-height:20px;letter-spacing:-0.22px;">260</div>
<div class="t" style="left:111.7px;top:612.1px;font-size:15px;line-height:20px;letter-spacing:-0.14px;">Screenshot 2025-08-28 103355.png</div>
<div class="t" style="left:387.0px;top:612.1px;font-size:15px;line-height:20px;letter-spacing:-0.13px;">Program Screenshot - 260.png</div>
<div class="t" style="left:630.5px;top:612.1px;font-size:15px;line-height:20px;letter-spacing:-0.18px;">C:\Users\kj\Pictures\Screenshots\</div>
<div class="t" style="left:879.7px;top:612.1px;font-size:15px;line-height:20px;letter-spacing:-0.22px;">2810</div>
<div class="t" style="left:965.1px;top:612.1px;font-size:15px;line-height:20px;letter-spacing:-0.22px;">1604</div>
<div class="t" style="left:1059.4px;top:612.1px;font-size:15px;line-height:20px;letter-spacing:-0.22px;">OK</div>
<div class="b" style="left:7px;top:639px;width:16px;height:16px;background:#005fb8;border-radius:3.5px;"></div>
<svg class="b" style="left:7px;top:639px" width="16" height="16" viewBox="0 0 16 16"><path d="M3.8 8.3 L6.5 10.8 L12 5.6" fill="none" stroke="#fff" stroke-width="1.1"/></svg>
<svg class="b" style="left:91px;top:637px" width="16" height="20" viewBox="0 0 16 20"><path d="M0.7 0.7 H10.5 L15.3 5.5 V19.3 H0.7 Z" fill="#fdfdfd" stroke="#6e6e6e" stroke-width="1.2" stroke-linejoin="round"/><path d="M10.5 0.7 V5.5 H15.3" fill="none" stroke="#6e6e6e" stroke-width="1.1" stroke-linejoin="round"/><rect x="3.9" y="6.8" width="8.1" height="8.1" rx="0.5" fill="url(#fg)"/><path d="M3.9 13.6 L7.9 10 L12 13.4 V14.9 H3.9 Z" fill="url(#fm)"/><circle cx="9.6" cy="8.6" r="0.75" fill="#fff"/></svg>
<div class="t" style="left:28.9px;top:638.1px;font-size:15px;line-height:20px;letter-spacing:-0.22px;">261</div>
<div class="t" style="left:111.7px;top:638.1px;font-size:15px;line-height:20px;letter-spacing:-0.14px;">Screenshot 2025-08-28 103439.png</div>
<div class="t" style="left:387.0px;top:638.1px;font-size:15px;line-height:20px;letter-spacing:-0.13px;">Program Screenshot - 261.png</div>
<div class="t" style="left:630.5px;top:638.1px;font-size:15px;line-height:20px;letter-spacing:-0.18px;">C:\Users\kj\Pictures\Screenshots\</div>
<div class="t" style="left:879.7px;top:638.1px;font-size:15px;line-height:20px;letter-spacing:-0.22px;">2810</div>
<div class="t" style="left:965.1px;top:638.1px;font-size:15px;line-height:20px;letter-spacing:-0.22px;">1604</div>
<div class="t" style="left:1059.4px;top:638.1px;font-size:15px;line-height:20px;letter-spacing:-0.22px;">OK</div>
<div class="b" style="left:7px;top:665px;width:16px;height:16px;background:#005fb8;border-radius:3.5px;"></div>
<svg class="b" style="left:7px;top:665px" width="16" height="16" viewBox="0 0 16 16"><path d="M3.8 8.3 L6.5 10.8 L12 5.6" fill="none" stroke="#fff" stroke-width="1.1"/></svg>
<svg class="b" style="left:91px;top:663px" width="16" height="20" viewBox="0 0 16 20"><path d="M0.7 0.7 H10.5 L15.3 5.5 V19.3 H0.7 Z" fill="#fdfdfd" stroke="#6e6e6e" stroke-width="1.2" stroke-linejoin="round"/><path d="M10.5 0.7 V5.5 H15.3" fill="none" stroke="#6e6e6e" stroke-width="1.1" stroke-linejoin="round"/><rect x="3.9" y="6.8" width="8.1" height="8.1" rx="0.5" fill="url(#fg)"/><path d="M3.9 13.6 L7.9 10 L12 13.4 V14.9 H3.9 Z" fill="url(#fm)"/><circle cx="9.6" cy="8.6" r="0.75" fill="#fff"/></svg>
<div class="t" style="left:28.9px;top:664.1px;font-size:15px;line-height:20px;letter-spacing:-0.22px;">262</div>
<div class="t" style="left:111.7px;top:664.1px;font-size:15px;line-height:20px;letter-spacing:-0.14px;">Screenshot 2025-08-28 103520.png</div>
<div class="t" style="left:387.0px;top:664.1px;font-size:15px;line-height:20px;letter-spacing:-0.13px;">Program Screenshot - 262.png</div>
<div class="t" style="left:630.5px;top:664.1px;font-size:15px;line-height:20px;letter-spacing:-0.18px;">C:\Users\kj\Pictures\Screenshots\</div>
<div class="t" style="left:879.7px;top:664.1px;font-size:15px;line-height:20px;letter-spacing:-0.22px;">1104</div>
<div class="t" style="left:965.1px;top:664.1px;font-size:15px;line-height:20px;letter-spacing:-0.22px;">968</div>
<div class="t" style="left:1059.4px;top:664.1px;font-size:15px;line-height:20px;letter-spacing:-0.22px;">OK</div>
<div class="b" style="left:1px;top:686px;width:1138px;height:26px;background:#0078d4;"></div>
<div class="b" style="left:7px;top:691px;width:16px;height:16px;background:#0a5fb4;border-radius:3.5px;"></div>
<svg class="b" style="left:7px;top:691px" width="16" height="16" viewBox="0 0 16 16"><path d="M3.8 8.3 L6.5 10.8 L12 5.6" fill="none" stroke="#fff" stroke-width="1.1"/></svg>
<svg class="b" style="left:91px;top:689px" width="16" height="20" viewBox="0 0 16 20"><path d="M0.7 0.7 H10.5 L15.3 5.5 V19.3 H0.7 Z" fill="#fdfdfd" stroke="#6e6e6e" stroke-width="1.2" stroke-linejoin="round"/><path d="M10.5 0.7 V5.5 H15.3" fill="none" stroke="#6e6e6e" stroke-width="1.1" stroke-linejoin="round"/><rect x="3.9" y="6.8" width="8.1" height="8.1" rx="0.5" fill="url(#fg)"/><path d="M3.9 13.6 L7.9 10 L12 13.4 V14.9 H3.9 Z" fill="url(#fm)"/><circle cx="9.6" cy="8.6" r="0.75" fill="#fff"/></svg>
<div class="t" style="left:28.9px;top:690.1px;font-size:15px;line-height:20px;color:#fff;letter-spacing:-0.22px;">263</div>
<div class="t" style="left:111.7px;top:690.1px;font-size:15px;line-height:20px;color:#fff;letter-spacing:-0.14px;">Screenshot 2025-08-28 105920.png</div>
<div class="t" style="left:387.0px;top:690.1px;font-size:15px;line-height:20px;color:#fff;letter-spacing:-0.13px;">Program Screenshot - 263.png</div>
<div class="t" style="left:630.5px;top:690.1px;font-size:15px;line-height:20px;color:#fff;letter-spacing:-0.18px;">C:\Users\kj\Pictures\Screenshots\</div>
<div class="t" style="left:879.7px;top:690.1px;font-size:15px;line-height:20px;color:#fff;letter-spacing:-0.22px;">2254</div>
<div class="t" style="left:965.1px;top:690.1px;font-size:15px;line-height:20px;color:#fff;letter-spacing:-0.22px;">1060</div>
<div class="t" style="left:1059.4px;top:690.1px;font-size:15px;line-height:20px;color:#fff;letter-spacing:-0.22px;">OK</div>
<div class="b" style="left:7px;top:717px;width:16px;height:16px;background:#005fb8;border-radius:3.5px;"></div>
<svg class="b" style="left:7px;top:717px" width="16" height="16" viewBox="0 0 16 16"><path d="M3.8 8.3 L6.5 10.8 L12 5.6" fill="none" stroke="#fff" stroke-width="1.1"/></svg>
<svg class="b" style="left:91px;top:715px" width="16" height="20" viewBox="0 0 16 20"><path d="M0.7 0.7 H10.5 L15.3 5.5 V19.3 H0.7 Z" fill="#fdfdfd" stroke="#6e6e6e" stroke-width="1.2" stroke-linejoin="round"/><path d="M10.5 0.7 V5.5 H15.3" fill="none" stroke="#6e6e6e" stroke-width="1.1" stroke-linejoin="round"/><rect x="3.9" y="6.8" width="8.1" height="8.1" rx="0.5" fill="url(#fg)"/><path d="M3.9 13.6 L7.9 10 L12 13.4 V14.9 H3.9 Z" fill="url(#fm)"/><circle cx="9.6" cy="8.6" r="0.75" fill="#fff"/></svg>
<div class="t" style="left:28.9px;top:716.1px;font-size:15px;line-height:20px;letter-spacing:-0.22px;">264</div>
<div class="t" style="left:111.7px;top:716.1px;font-size:15px;line-height:20px;letter-spacing:-0.14px;">Screenshot 2025-08-28 110030.png</div>
<div class="t" style="left:387.0px;top:716.1px;font-size:15px;line-height:20px;letter-spacing:-0.13px;">Program Screenshot - 264.png</div>
<div class="t" style="left:630.5px;top:716.1px;font-size:15px;line-height:20px;letter-spacing:-0.18px;">C:\Users\kj\Pictures\Screenshots\</div>
<div class="t" style="left:879.7px;top:716.1px;font-size:15px;line-height:20px;letter-spacing:-0.22px;">2810</div>
<div class="t" style="left:965.1px;top:716.1px;font-size:15px;line-height:20px;letter-spacing:-0.22px;">1604</div>
<div class="t" style="left:1059.4px;top:716.1px;font-size:15px;line-height:20px;letter-spacing:-0.22px;">OK</div>
</div>
<div class="b" style="left:476px;top:267px;width:1150px;height:26px;background:#fff;"></div>
<div class="b" style="left:504px;top:268px;width:1px;height:26px;background:#e5e5e5;"></div>
<div class="b" style="left:564px;top:268px;width:1px;height:26px;background:#e5e5e5;"></div>
<div class="b" style="left:862px;top:268px;width:1px;height:26px;background:#e5e5e5;"></div>
<div class="b" style="left:1106px;top:268px;width:1px;height:26px;background:#e5e5e5;"></div>
<div class="b" style="left:1355px;top:268px;width:1px;height:26px;background:#e5e5e5;"></div>
<div class="b" style="left:1440px;top:268px;width:1px;height:26px;background:#e5e5e5;"></div>
<div class="b" style="left:1535px;top:268px;width:1px;height:26px;background:#e5e5e5;"></div>
<div class="b" style="left:1614px;top:268px;width:1px;height:26px;background:#e5e5e5;"></div>
<div class="t" style="left:508.7px;top:273.1px;font-size:15px;line-height:20px;letter-spacing:-0.22px;">Index</div>
<div class="t" style="left:568.7px;top:273.1px;font-size:15px;line-height:20px;letter-spacing:-0.22px;">Filename</div>
<div class="t" style="left:867.1px;top:273.1px;font-size:15px;line-height:20px;letter-spacing:-0.22px;">New Filename</div>
<div class="t" style="left:1110.6px;top:273.1px;font-size:15px;line-height:20px;letter-spacing:-0.22px;">Path</div>
<div class="t" style="left:1359.5px;top:273.1px;font-size:15px;line-height:20px;letter-spacing:-0.22px;">Width</div>
<div class="t" style="left:1444.4px;top:273.1px;font-size:15px;line-height:20px;letter-spacing:-0.22px;">Height</div>
<div class="t" style="left:1540.0px;top:273.1px;font-size:15px;line-height:20px;letter-spacing:-0.22px;">Error</div>
</body></html>
